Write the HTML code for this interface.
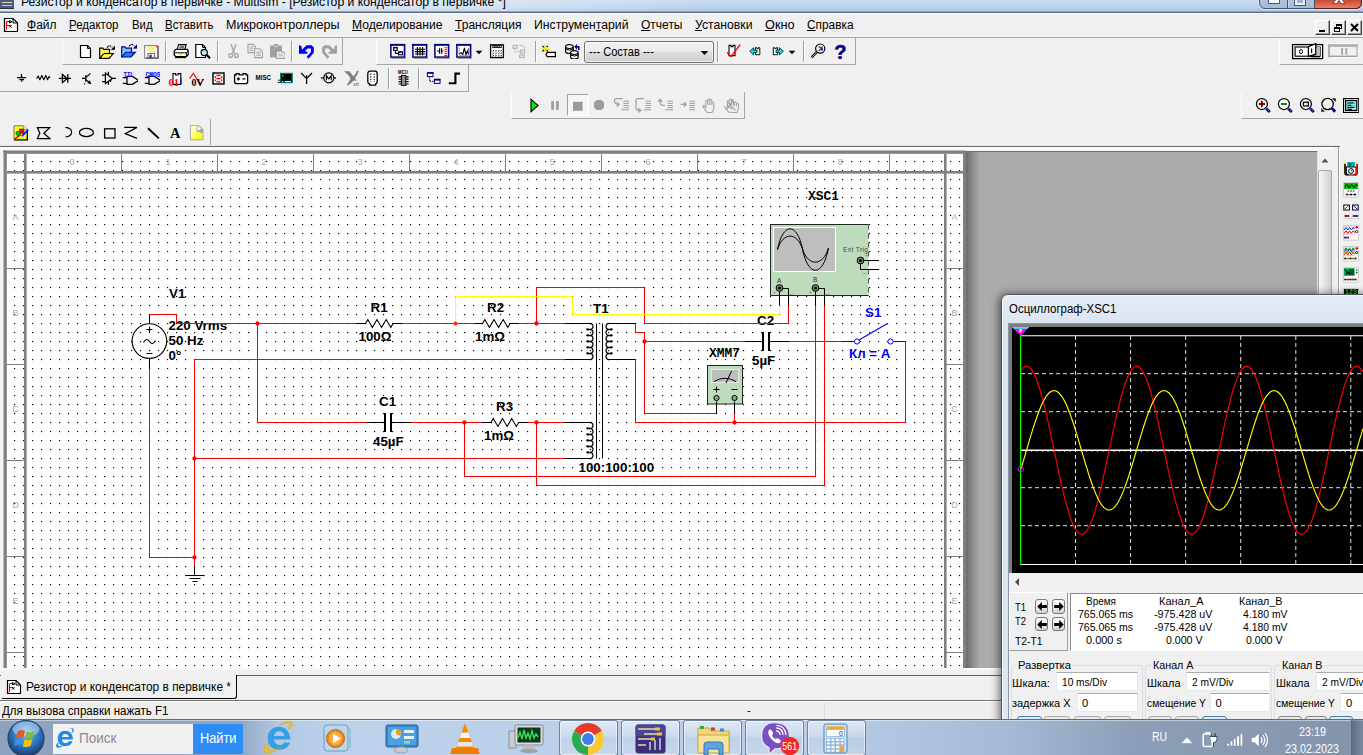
<!DOCTYPE html>
<html lang="ru"><head><meta charset="utf-8"><title>Multisim</title>
<style>
html,body{margin:0;padding:0}
body{width:1363px;height:755px;position:relative;overflow:hidden;background:#f0f0f0;font-family:"Liberation Sans",sans-serif;font-size:12px;color:#000}
.t{position:absolute;white-space:nowrap;transform-origin:0 0;display:block}
u{text-decoration:underline;text-underline-offset:1px}
svg{display:block;overflow:hidden}
svg text{font-family:"Liberation Sans",sans-serif}
</style></head>
<body>
<div style="position:absolute;left:0px;top:0px;width:1363px;height:12px;background:linear-gradient(180deg,#c9dcf0 0%,#bdd3ec 60%,#a9c3e2 100%)"></div><div style="position:absolute;left:0px;top:0px;width:700px;height:11px;background:linear-gradient(90deg,rgba(255,255,255,.55),rgba(255,255,255,.35) 70%,rgba(255,255,255,0))"></div><div style="position:absolute;left:0px;top:11px;width:1363px;height:1px;background:#8ea4c0"></div><div style="position:absolute;left:0px;top:12px;width:1363px;height:1px;background:#5d6b80"></div><div style="position:absolute;left:0px;top:13px;width:1363px;height:1px;background:#fafafa"></div><div style="position:absolute;left:0px;top:0px;width:14px;height:8px;background:#4a5a8a;border-bottom:1px solid #333"></div><div style="position:absolute;left:2px;top:2px;width:10px;height:1px;background:#e8d8a0"></div><div style="position:absolute;left:2px;top:5px;width:10px;height:1px;background:#c0c8e0"></div><span class="t" style="left:20.50px;top:-5.06px;font-size:12.3px;line-height:15px;color:#000;transform:scaleX(0.9917);">Резистор и конденсатор в первичке - Multisim - [Резистор и конденсатор в первичке *]</span><div style="position:absolute;left:1259px;top:-10px;width:103px;height:19px;border:1px solid #47546a;border-radius:0 0 6px 6px;background:linear-gradient(180deg,#b9cbe0,#a6bbd6);box-sizing:border-box;box-shadow:0 0 0 1px rgba(255,255,255,.45)"></div><div style="position:absolute;left:1314px;top:-10px;width:48px;height:19px;border:1px solid #5c1f18;border-left:none;border-radius:0 0 6px 0;background:linear-gradient(180deg,#c23a28 0%,#cc4a34 55%,#e08462 100%);box-sizing:border-box"></div><div style="position:absolute;left:1287px;top:-10px;width:1px;height:18px;background:#47546a"></div><div style="position:absolute;left:1288px;top:-10px;width:1px;height:18px;background:rgba(255,255,255,.35)"></div><div style="position:absolute;left:1313.5px;top:-10px;width:1px;height:18px;background:#47546a"></div><div style="position:absolute;left:1268px;top:-4px;width:11.5px;height:7.5px;background:#fbfcfe;border:1px solid #4a5870;box-sizing:border-box"></div><div style="position:absolute;left:1294.5px;top:-5px;width:10.5px;height:9.5px;background:#9fb4d0;border:2px solid #eef2f8;outline:1px solid #4a5870;box-sizing:border-box"></div><svg style="position:absolute;left:1330px;top:0px" width="18" height="5" viewBox="0 0 18 5"><path d="M3,3.6 L6.2,-1 H9 L9,0.4 L9,-1 H11.8 L15,3.6 H11.2 L9,0.6 L6.8,3.6 Z" fill="#fff" stroke="#6a2a22" stroke-width="0.8"/></svg><div style="position:absolute;left:0px;top:14px;width:1363px;height:23px;background:#f0f0f0"></div><div style="position:absolute;left:0px;top:37px;width:1363px;height:1px;background:#a8a8a8"></div><svg style="position:absolute;left:3.0px;top:17.0px" width="16" height="16" viewBox="0 0 16 16"><path d="M1.5,1.5 H10 L14.5,6 V14.5 H1.5 Z" fill="#fff" stroke="#000" stroke-width="1.2" /><path d="M10,1.5 V6 H14.5" fill="none" stroke="#000" stroke-width="1" /><path d="M3.5,4.5 H6.5 M3.5,4.5 V12 M3.5,8.5 H6" fill="none" stroke="#f00" stroke-width="1.2" /><path d="M6.5,3.5 L9,4.8 L6.5,6 Z M6,8 l2.5,2.5 M8.5,8 l-2.5,2.5" fill="none" stroke="#000" stroke-width="1" /><path d="M2.5,13.5 l1.5,-1.5" fill="none" stroke="#f00" stroke-width="1" /></svg><span class="t" style="left:27.00px;top:17.74px;font-size:12.3px;line-height:15px;color:#000;transform:scaleX(0.9755);"><u>Ф</u>айл</span><span class="t" style="left:69.00px;top:17.74px;font-size:12.3px;line-height:15px;color:#000;transform:scaleX(0.9348);"><u>Р</u>едактор</span><span class="t" style="left:132.00px;top:17.74px;font-size:12.3px;line-height:15px;color:#000;transform:scaleX(0.9212);">Вид</span><span class="t" style="left:165.00px;top:17.74px;font-size:12.3px;line-height:15px;color:#000;transform:scaleX(0.9302);"><u>В</u>ставить</span><span class="t" style="left:226.00px;top:17.74px;font-size:12.3px;line-height:15px;color:#000;transform:scaleX(1.0202);">Ми<u>к</u>роконтроллеры</span><span class="t" style="left:352.00px;top:17.74px;font-size:12.3px;line-height:15px;color:#000;transform:scaleX(0.9833);"><u>М</u>оделирование</span><span class="t" style="left:455.00px;top:17.74px;font-size:12.3px;line-height:15px;color:#000;transform:scaleX(0.9800);"><u>Т</u>рансляция</span><span class="t" style="left:534.00px;top:17.74px;font-size:12.3px;line-height:15px;color:#000;transform:scaleX(0.9933);">Инструмен<u>т</u>арий</span><span class="t" style="left:641.00px;top:17.74px;font-size:12.3px;line-height:15px;color:#000;transform:scaleX(0.9761);"><u>О</u>тчеты</span><span class="t" style="left:695.00px;top:17.74px;font-size:12.3px;line-height:15px;color:#000;transform:scaleX(0.9931);"><u>У</u>становки</span><span class="t" style="left:765.00px;top:17.74px;font-size:12.3px;line-height:15px;color:#000;transform:scaleX(1.0321);"><u>О</u>кно</span><span class="t" style="left:807.00px;top:17.74px;font-size:12.3px;line-height:15px;color:#000;transform:scaleX(0.9637);"><u>С</u>правка</span><div style="position:absolute;left:1315px;top:20px;width:15px;height:15px;background:#f0f0f0;border:1px solid;border-color:#fff #404040 #404040 #fff;box-sizing:border-box;box-shadow:inset -1px -1px 0 #a0a0a0"></div><div style="position:absolute;left:1331px;top:20px;width:15px;height:15px;background:#f0f0f0;border:1px solid;border-color:#fff #404040 #404040 #fff;box-sizing:border-box;box-shadow:inset -1px -1px 0 #a0a0a0"></div><div style="position:absolute;left:1347px;top:20px;width:15px;height:15px;background:#f0f0f0;border:1px solid;border-color:#fff #404040 #404040 #fff;box-sizing:border-box;box-shadow:inset -1px -1px 0 #a0a0a0"></div><div style="position:absolute;left:1319px;top:30px;width:6px;height:2px;background:#000"></div><div style="position:absolute;left:1336px;top:24px;width:6px;height:5px;border:1px solid #000;border-top-width:2px;box-sizing:border-box"></div><div style="position:absolute;left:1334px;top:27px;width:6px;height:5px;border:1px solid #000;border-top-width:2px;box-sizing:border-box;background:#f0f0f0"></div><svg style="position:absolute;left:1350px;top:23px" width="10" height="10" viewBox="0 0 10 10"><path d="M1,1 L8,8 M8,1 L1,8" stroke="#000" stroke-width="2"/></svg><div style="position:absolute;left:62px;top:38px;width:281px;height:27px;border-bottom:1px solid #a6a6a6;box-sizing:border-box;border-right:1px solid #a6a6a6;border-left:1px solid #fdfdfd;"></div><svg style="position:absolute;left:77.0px;top:43.0px" width="16" height="16" viewBox="0 0 16 16"><path d="M3.5,2.5 H10.5 L13.5,5.5 V14.5 H3.5 Z" fill="#fff" stroke="#000" stroke-width="1.2" /><path d="M10.5,2.5 V5.5 H13.5" fill="none" stroke="#000" stroke-width="1" /></svg><svg style="position:absolute;left:99.0px;top:43.0px" width="16" height="16" viewBox="0 0 16 16"><g transform="translate(0,0)"><path d="M0.7,15.2 V5.1 H4 L4.7,6.4 H10.5 V10.4" fill="#f6f060" stroke="#000" stroke-width="1.15" /><path d="M0.9,15.3 L4.7,10.5 H14.3 L10,15.3 Z" fill="#f2ec30" stroke="#000" stroke-width="1.15" /><path d="M2,8 h7 M2,10 h3 M5,12.6 h7 M4,14 h6" fill="none" stroke="#ffffff" stroke-width="0.9" stroke-dasharray="1,1"/><path d="M8,4.8 Q10.6,0.8 13.2,4.4" fill="none" stroke="#000" stroke-width="1.1" stroke-dasharray="2.2,0.8"/><path d="M16,2.8 V6.7 H12.1 Z" fill="#000" stroke="#000" stroke-width="0.3" /></g></svg><svg style="position:absolute;left:121.0px;top:43.0px" width="16" height="16" viewBox="0 0 16 16"><g transform="translate(0,-1.3)"><path d="M0.7,15.2 V5.1 H4 L4.7,6.4 H10.5 V10.4" fill="#86c0fa" stroke="#000088" stroke-width="1.15" /><path d="M0.9,15.3 L4.7,10.5 H14.3 L10,15.3 Z" fill="#0a84f8" stroke="#000088" stroke-width="1.15" /><path d="M8,4.8 Q10.6,0.8 13.2,4.4" fill="none" stroke="#000088" stroke-width="1.1" stroke-dasharray="2.2,0.8"/><path d="M16,2.8 V6.7 H12.1 Z" fill="#000088" stroke="#000088" stroke-width="0.3" /></g></svg><svg style="position:absolute;left:143.0px;top:43.0px" width="16" height="16" viewBox="0 0 16 16"><rect x="1.5" y="2.5" width="13" height="12.3" fill="#f3f3f3" stroke="#8a8a8a" stroke-width="1"/><path d="M15.3,3 V15.4 H2.2" fill="none" stroke="#5a5a5a" stroke-width="1" /><rect x="4.6" y="3" width="7.2" height="6" fill="#f3ee72" stroke="none" stroke-width="1"/><path d="M5,9 l6,-6 M5,6 l3,-3 M8,9 l3.5,-3.5" fill="none" stroke="#fffde0" stroke-width="0.9" /><rect x="5" y="10.6" width="6.4" height="4" fill="#fafafa" stroke="#5e5e5e" stroke-width="0.9"/><rect x="6.6" y="11.8" width="2" height="2.8" fill="#222" stroke="none" stroke-width="1"/><rect x="12.8" y="3.2" width="1" height="1.2" fill="#f00" stroke="none" stroke-width="1"/></svg><svg style="position:absolute;left:173.0px;top:43.0px" width="16" height="16" viewBox="0 0 16 16"><path d="M4.2,6.3 L5.6,1.6 H13.2 L11.8,6.3" fill="#fff" stroke="#000" stroke-width="1.1" /><path d="M6.8,3.2 H11.5 M6.3,4.8 H11" fill="none" stroke="#000" stroke-width="0.8" /><path d="M1.2,8 L3,6.3 H14.2 L15.2,7.5 V11.5 L13.5,13.6 H2.6 L1.2,12 Z" fill="#fff" stroke="#000" stroke-width="1.2" /><path d="M1.4,9.8 H13.4 L15,8 M13.4,9.8 V13.4" fill="none" stroke="#000" stroke-width="1" /><rect x="6.5" y="11" width="3" height="1.2" fill="#e8d800" stroke="none" stroke-width="1"/><path d="M2,14.6 H13" fill="none" stroke="#000" stroke-width="1.1" /></svg><svg style="position:absolute;left:195.0px;top:43.0px" width="16" height="16" viewBox="0 0 16 16"><path d="M0.8,1.5 H7.5 L10.5,4.5 V14.5 H0.8 Z" fill="#fff" stroke="#000" stroke-width="1.2" /><path d="M7.5,1.5 V4.5 H10.5" fill="none" stroke="#000" stroke-width="1" /><circle cx="9.2" cy="9.4" r="3.1" fill="#bff3f6" stroke="#000" stroke-width="1.2"/><path d="M8,8.4 q1,-1.2 2.2,-0.6" fill="none" stroke="#33b8d8" stroke-width="1" /><path d="M11.6,11.8 L15,15.2" fill="none" stroke="#000" stroke-width="2" /></svg><svg style="position:absolute;left:225.0px;top:43.0px" width="16" height="16" viewBox="0 0 16 16"><path d="M6,1.2 L9.6,10.4 M11,1.2 L7.4,10.4" fill="none" stroke="#a0a0a0" stroke-width="1.3" /><circle cx="5.6" cy="12.6" r="1.9" fill="none" stroke="#a0a0a0" stroke-width="1.3"/><circle cx="11.4" cy="12.6" r="1.9" fill="none" stroke="#a0a0a0" stroke-width="1.3"/></svg><svg style="position:absolute;left:247.0px;top:43.0px" width="16" height="16" viewBox="0 0 16 16"><path d="M1,1.4 H6 L8.4,3.8 V9.6 H1 Z" fill="#f4f4f4" stroke="#a0a0a0" stroke-width="1.1" /><path d="M2.6,4 H6.5 M2.6,5.8 H6.5 M2.6,7.6 H6.5" fill="none" stroke="#a0a0a0" stroke-width="0.9" /><path d="M7.6,5.8 H12.6 L15.6,8.8 V14.6 H7.6 Z" fill="#f4f4f4" stroke="#a0a0a0" stroke-width="1.1" /><path d="M9.3,9 H13.8 M9.3,10.8 H13.8 M9.3,12.6 H13.8" fill="none" stroke="#a0a0a0" stroke-width="0.9" /></svg><svg style="position:absolute;left:269.0px;top:43.0px" width="16" height="16" viewBox="0 0 16 16"><rect x="1" y="2.6" width="12" height="11.8" fill="#a0a0a0" stroke="none" stroke-width="1"/><rect x="4.8" y="1.2" width="4.6" height="2.4" fill="#a0a0a0" stroke="none" stroke-width="1"/><rect x="5.4" y="3.2" width="3.4" height="0.9" fill="#e8e8e8" stroke="none" stroke-width="1"/><path d="M7.4,8.2 H13 L16,10.5 V15.4 H7.4 Z" fill="#f4f4f4" stroke="#a0a0a0" stroke-width="1.1" /><path d="M9.2,10.8 H13.6 M9.2,12.8 H14" fill="none" stroke="#a0a0a0" stroke-width="0.9" /></svg><svg style="position:absolute;left:298.0px;top:43.0px" width="16" height="16" viewBox="0 0 16 16"><path d="M1,2.2 L3.4,3 L3.9,6.8 L8.6,2.2 H13.8 L15.8,4.5 V9.7 L10.6,15.8 L8.6,13.8 L12.9,8.9 V5.4 H9.6 L7,8 L9.8,9.3 L9,10.8 H1 Z" fill="#0000ff"/></svg><svg style="position:absolute;left:321.0px;top:43.0px" width="16" height="16" viewBox="0 0 16 16"><g transform="translate(17,0) scale(-1,1)"><path d="M1,2.2 L3.4,3 L3.9,6.8 L8.6,2.2 H13.8 L15.8,4.5 V9.7 L10.6,15.8 L8.6,13.8 L12.9,8.9 V5.4 H9.6 L7,8 L9.8,9.3 L9,10.8 H1 Z" fill="#a0a0a0"/></g></svg><div style="position:absolute;left:165px;top:41px;width:1px;height:21px;background:#a0a0a0"></div><div style="position:absolute;left:166px;top:41px;width:1px;height:21px;background:#fff"></div><div style="position:absolute;left:217px;top:41px;width:1px;height:21px;background:#a0a0a0"></div><div style="position:absolute;left:218px;top:41px;width:1px;height:21px;background:#fff"></div><div style="position:absolute;left:291px;top:41px;width:1px;height:21px;background:#a0a0a0"></div><div style="position:absolute;left:292px;top:41px;width:1px;height:21px;background:#fff"></div><div style="position:absolute;left:376px;top:38px;width:480px;height:27px;border-bottom:1px solid #a6a6a6;box-sizing:border-box;border-right:1px solid #a6a6a6;border-left:1px solid #fdfdfd;"></div><svg style="position:absolute;left:390.0px;top:43.0px" width="16" height="16" viewBox="0 0 16 16"><rect x="0.9" y="1.7" width="13.6" height="12.4" fill="#fff" stroke="#000080" stroke-width="1.5"/><rect x="0.15" y="0.95" width="15.1" height="1.7" fill="#000080" stroke="none" stroke-width="1"/><path d="M1.6,15.4 H15.8 V2.4" fill="none" stroke="#8c8c8c" stroke-width="0.9" /><rect x="3.6" y="4.4" width="3.6" height="3" fill="#fff" stroke="#000" stroke-width="1.1"/><rect x="3.6" y="4.2" width="3.6" height="1.2" fill="#000080" stroke="none" stroke-width="1"/><rect x="8.6" y="8.8" width="4" height="3" fill="#fff" stroke="#000" stroke-width="1.1"/><rect x="8.6" y="8.6" width="4" height="1.2" fill="#000080" stroke="none" stroke-width="1"/><path d="M5.4,7.4 V10.4 H8.6" fill="none" stroke="#000" stroke-width="1.1" /></svg><svg style="position:absolute;left:412.0px;top:43.0px" width="16" height="16" viewBox="0 0 16 16"><rect x="0.9" y="1.7" width="13.6" height="12.4" fill="#fff" stroke="#000080" stroke-width="1.5"/><rect x="0.15" y="0.95" width="15.1" height="1.7" fill="#000080" stroke="none" stroke-width="1"/><path d="M1.6,15.4 H15.8 V2.4" fill="none" stroke="#8c8c8c" stroke-width="0.9" /><path d="M3,6.2 H13 M3,8.6 H13 M3,11 H13 M5.4,4 V12.6 M8,4 V12.6 M10.6,4 V12.6" fill="none" stroke="#000" stroke-width="1.1" /></svg><svg style="position:absolute;left:434.0px;top:43.0px" width="16" height="16" viewBox="0 0 16 16"><rect x="0.9" y="1.7" width="13.6" height="12.4" fill="#fff" stroke="#000080" stroke-width="1.5"/><rect x="0.15" y="0.95" width="15.1" height="1.7" fill="#000080" stroke="none" stroke-width="1"/><path d="M1.6,15.4 H15.8 V2.4" fill="none" stroke="#8c8c8c" stroke-width="0.9" /><path d="M3,8 H5.6 M7.6,8 H9.4 M5.6,5.2 V10.8 M7.6,5.2 V10.8" fill="none" stroke="#000" stroke-width="1.2" /><path d="M10.4,4.8 H13 M10.4,6.8 H13 M10.4,8.8 H13 M10.4,10.8 H13 M10.4,12.6 H13" fill="none" stroke="#f00" stroke-width="1.1" /></svg><svg style="position:absolute;left:456.0px;top:43.0px" width="16" height="16" viewBox="0 0 16 16"><rect x="0.9" y="1.7" width="13.6" height="12.4" fill="#fff" stroke="#000080" stroke-width="1.5"/><rect x="0.15" y="0.95" width="15.1" height="1.7" fill="#000080" stroke="none" stroke-width="1"/><path d="M1.6,15.4 H15.8 V2.4" fill="none" stroke="#8c8c8c" stroke-width="0.9" /><path d="M3,11 L5.2,9.6 L6.8,11.4 L8.4,4.8 L10,11.8 L11.4,8 L12.6,11" fill="none" stroke="#000" stroke-width="1.1" /><path d="M3.2,4.4 V12.4 H13" fill="none" stroke="#888" stroke-width="0.8" /><path d="M12.6,5 V12" fill="none" stroke="#444" stroke-width="0.8" /></svg><svg style="position:absolute;left:489.0px;top:43.0px" width="16" height="16" viewBox="0 0 16 16"><rect x="1.6" y="1.8" width="12.8" height="12.8" fill="#fff" stroke="#000" stroke-width="1.3"/><rect x="3.8" y="2.4" width="8.4" height="2.2" fill="#fff" stroke="#000" stroke-width="0.9"/><path d="M5.2,3.6 h1.4 M7.4,3.6 h1.4 M9.6,3.6 h1.2" fill="none" stroke="#000" stroke-width="1" /><path d="M4.6,7 l-0.8,1.6 M7.4,7 l-0.8,1.6 M10.2,7 l-0.8,1.6 M12.6,7 l-0.8,1.6 M4.6,9.6 l-0.8,1.6 M7.4,9.6 l-0.8,1.6 M10.2,9.6 l-0.8,1.6 M12.6,9.6 l-0.8,1.6 M4.6,12 l-0.8,1.6 M7.4,12 l-0.8,1.6 M10.2,12 l-0.8,1.6 M12.6,12 l-0.8,1.6" fill="none" stroke="#000" stroke-width="0.85" /></svg><svg style="position:absolute;left:511.0px;top:43.0px" width="16" height="16" viewBox="0 0 16 16"><rect x="2" y="2.4" width="4.2" height="2.8" fill="none" stroke="#b0b0b0" stroke-width="1.1"/><rect x="9.4" y="7.2" width="4.2" height="2.8" fill="none" stroke="#b0b0b0" stroke-width="1.1"/><rect x="8.6" y="12" width="4.6" height="2.4" fill="none" stroke="#b0b0b0" stroke-width="1.1"/><path d="M4,5.4 V8.6 H9.2 M8.6,2.4 h2.6 l2.4,2.6 v2" fill="none" stroke="#b0b0b0" stroke-width="1.1" stroke-dasharray="1.6,1"/></svg><svg style="position:absolute;left:541.0px;top:43.0px" width="16" height="16" viewBox="0 0 16 16"><path d="M4.2,2 V9.4 M0.8,5.6 H8.2" fill="none" stroke="#f4ec00" stroke-width="1.6" /><path d="M1.4,2.8 L3,4.4 M7,2.8 L5.6,4.2 M1.4,8.6 L3,7 M7,8.4 L5.6,7" fill="none" stroke="#000" stroke-width="1.1" /><path d="M6.2,9.4 H14.4 V13.6 H6.2 L5,11.5 Z" fill="#fff" stroke="#000" stroke-width="1.2" /></svg><svg style="position:absolute;left:564.0px;top:43.0px" width="16" height="16" viewBox="0 0 16 16"><path d="M1.6,3.6 V8.4 Q1.6,10.4 5.4,10.4 Q9.2,10.4 9.2,8.4 V3.6" fill="#fff" stroke="#000" stroke-width="1.2" /><ellipse cx="5.4" cy="3.6" rx="3.8" ry="1.9" fill="#fff" stroke="#000" stroke-width="1.2"/><path d="M1.6,6 Q5.4,8.2 9.2,6" fill="none" stroke="#000" stroke-width="1" /><path d="M6.6,9.8 V14 Q6.6,16 10.4,16 Q14.2,16 14.2,14 V9.8" fill="#fff" stroke="#000" stroke-width="1.2" /><ellipse cx="10.4" cy="9.6" rx="3.8" ry="1.9" fill="#fff" stroke="#000" stroke-width="1.2"/><path d="M6.6,12 Q10.4,14 14.2,12" fill="none" stroke="#000" stroke-width="1" /><path d="M14.8,7 V3.8 H12" fill="none" stroke="#000090" stroke-width="1.5" /><path d="M10.4,3.8 L13,1.2 V6.4 Z" fill="#000090" stroke="#000090" stroke-width="0.3" /></svg><svg style="position:absolute;left:724.5px;top:43.0px" width="16" height="16" viewBox="0 0 16 16"><path d="M4,2.4 H6 V3.6 H8 V2.4 H10 V12.6 H4 Z" fill="#fff" stroke="#000" stroke-width="1.1" /><path d="M2.2,9.4 L6,13.6 L15.2,1.6" fill="none" stroke="#f00" stroke-width="1.5" /></svg><svg style="position:absolute;left:746.5px;top:43.0px" width="16" height="16" viewBox="0 0 16 16"><g transform="translate(1.9,2.2) scale(0.78)"><path d="M8.4,3.2 H10.4 V4.4 H12.2 V3.2 H14 V12.2 H8.4 Z" fill="#fff" stroke="#000" stroke-width="1.2" /><path d="M1,7.8 L6,3.2 V6.2 H10.4 V9.4 H6 V12.4 Z" fill="#00e0f0" stroke="#000" stroke-width="0.9" /></g></svg><svg style="position:absolute;left:769.5px;top:43.0px" width="16" height="16" viewBox="0 0 16 16"><g transform="translate(1.7,2.2) scale(0.78)"><path d="M2,3.2 H4 V4.4 H5.8 V3.2 H7.6 V12.2 H2 Z" fill="#fff" stroke="#000" stroke-width="1.2" /><path d="M15,7.8 L10,3.2 V6.2 H5.6 V9.4 H10 V12.4 Z" fill="#00e0f0" stroke="#000" stroke-width="0.9" /></g></svg><svg style="position:absolute;left:810.0px;top:43.0px" width="16" height="16" viewBox="0 0 16 16"><circle cx="10.2" cy="5.6" r="4.6" fill="#fffbd8" stroke="#000" stroke-width="1.2"/><path d="M8.6,3.4 L11.6,5.6 L8.6,7.8 M11.8,3.2 q1.2,2.4 0,4.8" fill="none" stroke="#1030d0" stroke-width="1.2" /><path d="M6.8,9 L1.6,14.4" fill="none" stroke="#000" stroke-width="2.4" /><path d="M6.6,9.2 L1.8,14.2" fill="none" stroke="#d8d8d8" stroke-width="0.8" /></svg><svg style="position:absolute;left:832.0px;top:43.0px" width="16" height="16" viewBox="0 0 16 16"><text stroke="#000080" stroke-width="0.5" x="8.4" y="15.6" font-size="20" font-weight="bold" fill="#000080" style="font-family:'Liberation Sans'" text-anchor="middle">?</text></svg><svg style="position:absolute;left:475.0px;top:48.0px" width="8" height="8" viewBox="0 0 16 16"><path d="M1.2,5.4 H14.8 L8,12.6 Z" fill="#000"/></svg><svg style="position:absolute;left:788.0px;top:48.0px" width="8" height="8" viewBox="0 0 16 16"><path d="M1.2,5.4 H14.8 L8,12.6 Z" fill="#000"/></svg><div style="position:absolute;left:535px;top:41px;width:1px;height:21px;background:#a0a0a0"></div><div style="position:absolute;left:536px;top:41px;width:1px;height:21px;background:#fff"></div><div style="position:absolute;left:717px;top:41px;width:1px;height:21px;background:#a0a0a0"></div><div style="position:absolute;left:718px;top:41px;width:1px;height:21px;background:#fff"></div><div style="position:absolute;left:803px;top:41px;width:1px;height:21px;background:#a0a0a0"></div><div style="position:absolute;left:804px;top:41px;width:1px;height:21px;background:#fff"></div><div style="position:absolute;left:584px;top:41px;width:130px;height:22px;border:1px solid #707070;border-radius:3px;background:linear-gradient(180deg,#f2f2f2,#ebebeb 45%,#dddddd 50%,#cfcfcf);box-sizing:border-box;box-shadow:inset 0 0 0 1px rgba(255,255,255,.7)"></div><span class="t" style="left:589.00px;top:45.44px;font-size:12.3px;line-height:15px;color:#000;transform:scaleX(0.9008);">--- Состав ---</span><svg style="position:absolute;left:699.5px;top:48.0px" width="9" height="9" viewBox="0 0 16 16"><path d="M1.2,5.4 H14.8 L8,12.6 Z" fill="#000"/></svg><div style="position:absolute;left:1279px;top:38px;width:90px;height:27px;border-bottom:1px solid #a6a6a6;box-sizing:border-box;border-left:1px solid #fdfdfd;"></div><svg style="position:absolute;left:1280px;top:38px" width="83" height="27" viewBox="1280 38 83 27"><rect x="1292.6" y="44.6" width="30" height="14" fill="#fff" stroke="#000" stroke-width="1.3"/><rect x="1295.1" y="47" width="25" height="9.2" fill="#fff" stroke="#000" stroke-width="1.15"/><rect x="1316.5" y="46.5" width="3.4" height="9.6" fill="#c0c0c0"/><ellipse cx="1301" cy="51.6" rx="1.6" ry="2" fill="none" stroke="#000" stroke-width="1"/><path d="M1308.4,46.6 L1315.8,43.6 V54.2 L1308.4,56.4 Z" fill="#fff" stroke="#000" stroke-width="1.3"/><path d="M1311.6,48.4 V53" stroke="#000" stroke-width="1.2"/><path d="M1310.5,56.6 H1320" stroke="#000" stroke-width="1.4"/><rect x="1329" y="44.6" width="28.4" height="11.8" fill="#f0f0f0" stroke="#a0a0a0" stroke-width="1.6"/><path d="M1328.4,43.8 H1358" stroke="#fff" stroke-width="1"/><path d="M1329,46 H1357.4" stroke="#a0a0a0" stroke-width="1.4"/><path d="M1331.2,57.8 H1358.2 V45" stroke="#fff" stroke-width="1" fill="none"/><rect x="1341.2" y="48.2" width="1.8" height="6.4" fill="#a0a0a0"/><rect x="1345.4" y="48.2" width="1.8" height="6.4" fill="#a0a0a0"/></svg><div style="position:absolute;left:-2px;top:65px;width:471px;height:27px;border-bottom:1px solid #a6a6a6;box-sizing:border-box;border-right:1px solid #a6a6a6;"></div><svg style="position:absolute;left:13.0px;top:70.0px" width="16" height="16" viewBox="0 0 16 16"><path d="M8.5,4 V7.5 M4,7.5 H13.2 M6.4,9.6 H11 M8,11.2 H9.4" fill="none" stroke="#000" stroke-width="1.25" /></svg><svg style="position:absolute;left:35.0px;top:70.0px" width="16" height="16" viewBox="0 0 16 16"><path d="M1.6,8.6 L3.2,6 L4.8,9.8 L6.8,5.4 L8.8,9.8 L10.8,5.4 L12.6,9.8 L14,6.4 L15,8" fill="none" stroke="#000" stroke-width="1.1" stroke-linejoin="round"/></svg><svg style="position:absolute;left:57.0px;top:70.0px" width="16" height="16" viewBox="0 0 16 16"><path d="M1.8,8.4 H14 M5.4,4.4 V12.6 L10.2,8.4 Z M10.8,4 V12.8" fill="none" stroke="#000" stroke-width="1.25" /></svg><svg style="position:absolute;left:79.0px;top:70.0px" width="16" height="16" viewBox="0 0 16 16"><path d="M3,8.4 H6.8 M6.8,5 V12 M6.8,7.6 L11.4,3.4 M6.8,9.4 L11.6,13.6" fill="none" stroke="#000" stroke-width="1.2" /><path d="M11.8,13.8 L8.6,13 L10.8,10.6 Z" fill="#000" stroke="#000" stroke-width="0.5" /><rect x="5" y="13.4" width="1.1" height="1.1" fill="#000" stroke="none" stroke-width="1"/></svg><svg style="position:absolute;left:100.0px;top:70.0px" width="16" height="16" viewBox="0 0 16 16"><path d="M5.4,3 V13.6 L12.4,8.4 Z" fill="none" stroke="#000" stroke-width="1.2" /><path d="M2,5.2 H5.4 M2,11.6 H5.4 M12.4,8.4 H16 M8.4,1.8 V5 M8.4,11.6 V14.8 M10.6,10 V12" fill="none" stroke="#000" stroke-width="1.2" /></svg><svg style="position:absolute;left:122.0px;top:70.0px" width="16" height="16" viewBox="0 0 16 16"><path d="M0.8,7.6 H5 M0.8,13.4 H5 M5,6.4 H10.4 L16.6,10.4 L10.4,14.4 H5 Z" fill="none" stroke="#000" stroke-width="1.25" /><text x="1.6" y="6.6" font-size="6.4" font-weight="bold" fill="#0000ff" style="font-family:'Liberation Mono'" text-anchor="start" textLength="10" lengthAdjust="spacingAndGlyphs">TTL</text></svg><svg style="position:absolute;left:144.0px;top:70.0px" width="16" height="16" viewBox="0 0 16 16"><path d="M0.8,7.6 H5 M0.8,13.4 H5 M5,6.4 H10.4 L16.6,10.4 L10.4,14.4 H5 Z" fill="none" stroke="#000" stroke-width="1.25" /><text x="1.6" y="6.6" font-size="6.4" font-weight="bold" fill="#0000ff" style="font-family:'Liberation Mono'" text-anchor="start" textLength="15" lengthAdjust="spacingAndGlyphs">CMOS</text></svg><svg style="position:absolute;left:166.0px;top:70.0px" width="16" height="16" viewBox="0 0 16 16"><path d="M7,14 V3.6 H9.6 V5 H12 V3.6 H14.8 V14.4 H7" fill="#fff" stroke="#000" stroke-width="1.1" /><path d="M15,8 V14" fill="none" stroke="#0000c0" stroke-width="1" /><text x="2.4" y="15.6" font-size="9.5" font-weight="bold" fill="#f00" style="font-family:'Liberation Serif'" text-anchor="start" textLength="10.5" lengthAdjust="spacingAndGlyphs">01</text></svg><svg style="position:absolute;left:188.0px;top:70.0px" width="16" height="16" viewBox="0 0 16 16"><path d="M1.6,8.6 L5.4,3.2 L12,14.6 L15.6,9" fill="none" stroke="#f00" stroke-width="1.1" /><text x="3.6" y="15.6" font-size="9.5" font-weight="bold" fill="#000" style="font-family:'Liberation Serif'" text-anchor="start" textLength="12" lengthAdjust="spacingAndGlyphs">0V</text></svg><svg style="position:absolute;left:210.0px;top:70.0px" width="16" height="16" viewBox="0 0 16 16"><rect x="3" y="3" width="11" height="11" fill="none" stroke="#000" stroke-width="1.4"/><path d="M6.4,5.4 H10.6 M6.4,8.6 H10.6 M6.4,11.8 H10.6 M5.4,6.2 V8 M5.4,9.4 V11 M11.6,6.2 V8 M11.6,9.4 V11" fill="none" stroke="#f00" stroke-width="1.2" /></svg><svg style="position:absolute;left:233.0px;top:70.0px" width="16" height="16" viewBox="0 0 16 16"><path d="M1.6,4.8 H3.2 V3.6 H6.2 V4.8 H10 V3.6 H13 V4.8 H14.6 V12.6 L13.4,13.6 H2.8 L1.6,12.6 Z" fill="#fff" stroke="#000" stroke-width="1.3" /><path d="M3.8,8.8 H7 M5.4,7.2 V10.4 M9.4,8.8 H12.4" fill="none" stroke="#000" stroke-width="1.3" /></svg><svg style="position:absolute;left:255.0px;top:70.0px" width="16" height="16" viewBox="0 0 16 16"><text x="0.6" y="10.2" font-size="7.4" font-weight="bold" fill="#000" style="font-family:'Liberation Sans'" text-anchor="start" textLength="15.4" lengthAdjust="spacingAndGlyphs">MISC</text></svg><svg style="position:absolute;left:277.0px;top:70.0px" width="16" height="16" viewBox="0 0 16 16"><rect x="3.6" y="3.4" width="11.6" height="9.2" fill="#000" stroke="#008080" stroke-width="1.2"/><rect x="5" y="5" width="1.4" height="1.4" fill="#00ff00" stroke="none" stroke-width="1"/><rect x="7.8" y="11" width="6" height="1" fill="#fff" stroke="none" stroke-width="1"/><rect x="5" y="11" width="1.2" height="1" fill="#fff" stroke="none" stroke-width="1"/><path d="M1,10.2 H3.4 M0.6,12.4 H3.4" fill="none" stroke="#000" stroke-width="0.9" /></svg><svg style="position:absolute;left:298.0px;top:70.0px" width="16" height="16" viewBox="0 0 16 16"><path d="M8.6,5.2 V14 M8.6,8.6 L3.2,3 M8.6,8.6 L14,3" fill="none" stroke="#000" stroke-width="1.25" /></svg><svg style="position:absolute;left:320.0px;top:70.0px" width="16" height="16" viewBox="0 0 16 16"><circle cx="8.8" cy="7.9" r="5" fill="none" stroke="#000" stroke-width="1.2"/><path d="M6.4,10.2 V5.6 L8.8,8.8 L11.2,5.6 V10.2" fill="none" stroke="#000" stroke-width="1.1" /><path d="M1.6,7.9 H3.8 M13.8,7.9 H16" fill="none" stroke="#000" stroke-width="1.1" /><rect x="0.8" y="7.1" width="1.6" height="1.6" fill="#f00" stroke="none" stroke-width="1"/><rect x="15.6" y="7.1" width="1.6" height="1.6" fill="#f00" stroke="none" stroke-width="1"/></svg><svg style="position:absolute;left:343.0px;top:70.0px" width="16" height="16" viewBox="0 0 16 16"><path d="M1,1.2 L6.4,1.2 Q9,4.6 10.2,6.2 L14,0.8 L15.8,1 Q14.4,5 12.2,8 L13.4,11 L10.6,10.6 Q8,13.6 5.4,15.2 L3.6,15 Q6.4,11.6 7.6,8.6 Q5,4 1,1.2 Z" fill="#808080" stroke="none" stroke-width="1" /><path d="M9.6,3 L13.6,2 L11.4,5.6 Z" fill="#f0f0f0" stroke="none" stroke-width="1" /><text x="10" y="15.8" font-size="5.5" font-weight="bold" fill="#808080" style="font-family:'Liberation Sans'" text-anchor="start" textLength="6" lengthAdjust="spacingAndGlyphs">sit</text></svg><svg style="position:absolute;left:364.0px;top:70.0px" width="16" height="16" viewBox="0 0 16 16"><path d="M6,1.2 H11 Q13.2,1.2 13.2,4 V11.4 Q13.2,13.4 11.6,13.8 V15.2 H5.6 V13.8 Q3.8,13.4 3.8,11.4 V4 Q3.8,1.2 6,1.2 Z" fill="#fff" stroke="#000" stroke-width="1.3" /><path d="M6.8,3.6 V12 M10.2,3.6 V12" fill="none" stroke="#000" stroke-width="1" stroke-dasharray="1.4,1.2"/></svg><svg style="position:absolute;left:395.0px;top:70.0px" width="16" height="16" viewBox="0 0 16 16"><text x="3" y="3.6" font-size="4.6" font-weight="bold" fill="#000" style="font-family:'Liberation Sans'" text-anchor="start" textLength="10" lengthAdjust="spacingAndGlyphs">MCU</text><rect x="6.4" y="5.4" width="4.4" height="10" fill="#8c8c8c" stroke="#000" stroke-width="0.9"/><path d="M3.6,6.8 H6.4 M3.6,9.2 H6.4 M3.6,11.6 H6.4 M3.6,14 H6.4 M10.8,6.8 H13.6 M10.8,9.2 H13.6 M10.8,11.6 H13.6 M10.8,14 H13.6" fill="none" stroke="#000" stroke-width="1.2" /></svg><svg style="position:absolute;left:425.0px;top:70.0px" width="16" height="16" viewBox="0 0 16 16"><rect x="2.4" y="2.6" width="5.6" height="4" fill="#fff" stroke="#000080" stroke-width="1"/><rect x="2" y="2" width="6.4" height="1.8" fill="#000080" stroke="none" stroke-width="1"/><rect x="9.4" y="9.4" width="5.6" height="4" fill="#fff" stroke="#000080" stroke-width="1"/><rect x="9" y="8.8" width="6.4" height="1.8" fill="#000080" stroke="none" stroke-width="1"/><path d="M4.6,7.4 V11.4 H9" fill="none" stroke="#000" stroke-width="1.1" stroke-dasharray="1.1,1.1"/></svg><svg style="position:absolute;left:447.0px;top:70.0px" width="16" height="16" viewBox="0 0 16 16"><path d="M1.8,13.2 H8.4 V3.6 H13" fill="none" stroke="#000" stroke-width="2.1" /></svg><div style="position:absolute;left:388px;top:68px;width:1px;height:21px;background:#a0a0a0"></div><div style="position:absolute;left:389px;top:68px;width:1px;height:21px;background:#fff"></div><div style="position:absolute;left:418px;top:68px;width:1px;height:21px;background:#a0a0a0"></div><div style="position:absolute;left:419px;top:68px;width:1px;height:21px;background:#fff"></div><div style="position:absolute;left:511px;top:92px;width:234px;height:27px;border-bottom:1px solid #a6a6a6;box-sizing:border-box;border-right:1px solid #a6a6a6;border-left:1px solid #fdfdfd;"></div><div style="position:absolute;left:567px;top:94px;width:22px;height:22px;border:1px solid;border-color:#a0a0a0 #fff #fff #a0a0a0;background:#f6f6f6;box-sizing:border-box"></div><svg style="position:absolute;left:525.0px;top:97.0px" width="16" height="16" viewBox="0 0 16 16"><path d="M6,2.2 V14.8 L13,8.5 Z" fill="#00f000" stroke="#000" stroke-width="1.1" /></svg><svg style="position:absolute;left:547.0px;top:97.0px" width="16" height="16" viewBox="0 0 16 16"><rect x="4.2" y="4" width="2.8" height="8.8" fill="#a0a0a0" stroke="none" stroke-width="1"/><rect x="9" y="4" width="2.8" height="8.8" fill="#a0a0a0" stroke="none" stroke-width="1"/></svg><svg style="position:absolute;left:569.0px;top:97.0px" width="16" height="16" viewBox="0 0 16 16"><rect x="4" y="4.8" width="9.6" height="9" fill="#9a9a9a" stroke="none" stroke-width="1"/></svg><svg style="position:absolute;left:591.0px;top:97.0px" width="16" height="16" viewBox="0 0 16 16"><path d="M5.6,3 H10.4 L13,5.6 V10.4 L10.4,13 H5.6 L3,10.4 V5.6 Z" fill="#9c9c9c" stroke="none" stroke-width="1" /></svg><svg style="position:absolute;left:613.0px;top:97.0px" width="16" height="16" viewBox="0 0 16 16"><path d="M10.4,4.2 H16.4 M10.4,6.4 H16.4 M10.4,8.5 H16.4 M10.4,10.7 H16.4 M8.4,12.8 H16.4" fill="none" stroke="#a0a0a0" stroke-width="1" /><path d="M9.6,1.6 H3.4 Q1.4,1.6 1.4,3.6 Q1.4,6.6 4.4,7.2" fill="none" stroke="#a0a0a0" stroke-width="1.2" /><path d="M4,4.8 L6.8,7.4 L4,9.8 Z" fill="#a0a0a0" stroke="#a0a0a0" stroke-width="0.4" /></svg><svg style="position:absolute;left:635.0px;top:97.0px" width="16" height="16" viewBox="0 0 16 16"><path d="M10.4,4.2 H16.4 M10.4,6.4 H16.4 M10.4,8.5 H16.4 M10.4,10.7 H16.4 M8.4,12.8 H16.4" fill="none" stroke="#a0a0a0" stroke-width="1" /><path d="M9,1.6 H2.8 Q1,1.6 1,3.4 V11.4 Q1,13 4,13.2" fill="none" stroke="#a0a0a0" stroke-width="1.2" /><path d="M3.6,10.8 L6.6,13.4 L3.6,15.8 Z" fill="#a0a0a0" stroke="#a0a0a0" stroke-width="0.4" /></svg><svg style="position:absolute;left:657.0px;top:97.0px" width="16" height="16" viewBox="0 0 16 16"><path d="M10.4,4.2 H16.4 M10.4,6.4 H16.4 M10.4,8.5 H16.4 M10.4,10.7 H16.4 M8.4,12.8 H16.4" fill="none" stroke="#a0a0a0" stroke-width="1" /><path d="M8,8.4 H5.6 Q3,8.2 3,3" fill="none" stroke="#a0a0a0" stroke-width="1.2" /><path d="M0.6,4.6 L3,1.4 L5.6,4.6 Z" fill="#a0a0a0" stroke="#a0a0a0" stroke-width="0.4" /></svg><svg style="position:absolute;left:679.0px;top:97.0px" width="16" height="16" viewBox="0 0 16 16"><path d="M10.4,4.2 H16.4 M10.4,6.4 H16.4 M10.4,8.5 H16.4 M10.4,10.7 H16.4 M10.4,12.8 H16.4" fill="none" stroke="#a0a0a0" stroke-width="1" /><path d="M1.6,7.4 H6" fill="none" stroke="#a0a0a0" stroke-width="1.2" /><path d="M5,4.8 L8,7.4 L5,10 Z" fill="#a0a0a0" stroke="#a0a0a0" stroke-width="0.4" /></svg><svg style="position:absolute;left:701.0px;top:97.0px" width="16" height="16" viewBox="0 0 16 16"><path d="M2,9.6 L4.4,13.2 L6,15.4 H11 L12.8,12 V6.2 Q12.8,5 11.8,5 Q10.8,5 10.8,6.2 V8 V3.8 Q10.8,2.6 9.8,2.6 Q8.8,2.6 8.8,3.8 V8 V3.2 Q8.8,2 7.8,2 Q6.8,2 6.8,3.2 V8 V4.6 Q6.8,3.6 5.8,3.6 Q4.8,3.6 4.8,4.6 V10.6 L3.2,8.6 Q2,8 2,9.6 Z" fill="none" stroke="#a0a0a0" stroke-width="1.05" /></svg><svg style="position:absolute;left:723.0px;top:97.0px" width="16" height="16" viewBox="0 0 16 16"><path d="M1.4,9.6 L4,13 L5.6,15.2 H9 M4.4,10.4 V4.6 Q4.4,3.6 5.4,3.6 Q6.4,3.6 6.4,4.6 V8 M6.4,3.2 Q6.4,2 7.4,2 Q8.4,2 8.4,3.2 V8 M8.4,3.8 Q8.4,2.6 9.4,2.6 Q10.4,2.6 10.4,3.8 V8" fill="none" stroke="#a0a0a0" stroke-width="1.05" /><path d="M9.4,15.4 H14 L15.4,12 V7.4 Q15.4,6.2 14.4,6.2 Q13.4,6.2 13.4,7.4 V9 M11.4,9 V6 Q11.4,5 12.4,5 Q13.4,5 13.4,6" fill="none" stroke="#a0a0a0" stroke-width="1.05" /><path d="M3,12.8 L10.6,3.6 M5.4,5.6 L12.6,13.6 M3.8,8.4 L9,12" fill="none" stroke="#a0a0a0" stroke-width="1.3" /></svg><div style="position:absolute;left:1241px;top:92px;width:130px;height:27px;border-bottom:1px solid #a6a6a6;box-sizing:border-box;border-left:1px solid #fdfdfd;"></div><svg style="position:absolute;left:1255.0px;top:97.0px" width="16" height="16" viewBox="0 0 16 16"><circle cx="6.9" cy="7" r="5.5" fill="#fff" stroke="#000" stroke-width="1.25"/><path d="M6.9,3.8 V10.2 M3.7,7 H10.1" fill="none" stroke="#800000" stroke-width="1.9" /><path d="M11.2,11.4 L14.8,15" fill="none" stroke="#000080" stroke-width="2.8" /><path d="M11.6,12.6 l1,-1 M13,14 l1,-1" fill="none" stroke="#e8e8ff" stroke-width="0.6" /></svg><svg style="position:absolute;left:1277.0px;top:97.0px" width="16" height="16" viewBox="0 0 16 16"><circle cx="6.9" cy="7" r="5.5" fill="#fff" stroke="#000" stroke-width="1.25"/><path d="M3.9,7 H9.9" fill="none" stroke="#008000" stroke-width="1.9" /><path d="M11.2,11.4 L14.8,15" fill="none" stroke="#000080" stroke-width="2.8" /><path d="M11.6,12.6 l1,-1 M13,14 l1,-1" fill="none" stroke="#e8e8ff" stroke-width="0.6" /></svg><svg style="position:absolute;left:1299.0px;top:97.0px" width="16" height="16" viewBox="0 0 16 16"><circle cx="6.9" cy="7" r="5.5" fill="#fff" stroke="#000" stroke-width="1.25"/><rect x="4.4" y="5.2" width="5" height="3.8" fill="#fff" stroke="#000" stroke-width="1.3"/><path d="M11.2,11.4 L14.8,15" fill="none" stroke="#000080" stroke-width="2.8" /><path d="M11.6,12.6 l1,-1 M13,14 l1,-1" fill="none" stroke="#e8e8ff" stroke-width="0.6" /></svg><svg style="position:absolute;left:1321.0px;top:97.0px" width="16" height="16" viewBox="0 0 16 16"><circle cx="6.6" cy="7" r="5.7" fill="none" stroke="#000" stroke-width="1.25"/><path d="M11,11.4 L14.2,14.8" fill="none" stroke="#000080" stroke-width="2.8" /><path d="M11.4,1.6 H14.6 V4.8 Z M0.4,11.4 V14.6 H3.6 Z" fill="#000" stroke="#000" stroke-width="0.3" /></svg><svg style="position:absolute;left:1343.0px;top:97.0px" width="16" height="16" viewBox="0 0 16 16"><rect x="0.6" y="1.6" width="15.2" height="14" fill="#fff" stroke="#000" stroke-width="1.2"/><rect x="2.6" y="3.6" width="11.2" height="10" fill="#30e0e8" stroke="#000" stroke-width="1.2"/><path d="M3.4,5 H13 M3.4,7.2 H13 M3.4,9.4 H13 M3.4,11.6 H13" fill="none" stroke="#d8ffff" stroke-width="0.7" /><path d="M4.4,6 H10.6 M4.4,8.2 H8.4 M4.4,10.4 H11.4 M4.4,12.4 H8.8" fill="none" stroke="#000" stroke-width="1.1" /></svg><div style="position:absolute;left:-2px;top:119px;width:213px;height:27px;border-bottom:1px solid #a6a6a6;box-sizing:border-box;border-right:1px solid #a6a6a6;"></div><svg style="position:absolute;left:13.0px;top:125.0px" width="16" height="16" viewBox="0 0 16 16"><path d="M1,0.8 H10.6 L14.2,4.4 V14.8 H1 Z" fill="#ffff00" stroke="#707070" stroke-width="1" /><path d="M14.4,4.4 V15 H1.2" fill="none" stroke="#000" stroke-width="1.2" /><path d="M10.6,0.8 V4.4 H14.2" fill="#fff" stroke="#888" stroke-width="0.8" /><rect x="6.6" y="4" width="4.4" height="4.4" fill="#e01010" stroke="#900" stroke-width="0.6"/><circle cx="5" cy="8.4" r="2.1" fill="#00c800" stroke="#006000" stroke-width="0.7"/><path d="M15.2,4.8 L8.6,11.4" fill="none" stroke="#0030ff" stroke-width="2" /><path d="M8.8,11 L7.4,12.6" fill="none" stroke="#f0e8c0" stroke-width="1.6" /><path d="M1.6,14 L7.6,9.6" fill="none" stroke="#e00000" stroke-width="1.5" /></svg><svg style="position:absolute;left:35.0px;top:125.0px" width="16" height="16" viewBox="0 0 16 16"><path d="M2.4,2.6 H14.8 L8.8,8.2 L14.8,13.6 H2.4 L4.8,8.2 Z" fill="none" stroke="#000" stroke-width="1.25" /></svg><svg style="position:absolute;left:58.0px;top:125.0px" width="16" height="16" viewBox="0 0 16 16"><path d="M7.4,2.4 Q13.6,3 13.6,7.2 Q13.6,11.2 7.4,12" fill="none" stroke="#000" stroke-width="1.25" /></svg><svg style="position:absolute;left:79.0px;top:125.0px" width="16" height="16" viewBox="0 0 16 16"><ellipse cx="7.4" cy="7.5" rx="7" ry="4.1" fill="none" stroke="#000" stroke-width="1.25"/></svg><svg style="position:absolute;left:101.0px;top:125.0px" width="16" height="16" viewBox="0 0 16 16"><rect x="3.6" y="3.8" width="10.4" height="9.2" fill="none" stroke="#000" stroke-width="1.3"/></svg><svg style="position:absolute;left:123.0px;top:125.0px" width="16" height="16" viewBox="0 0 16 16"><path d="M1.2,2.4 H14 L2.2,8.6 L14,13.4" fill="none" stroke="#000" stroke-width="1.2" /></svg><svg style="position:absolute;left:145.0px;top:125.0px" width="16" height="16" viewBox="0 0 16 16"><path d="M3,3.2 L13.8,13.4" fill="none" stroke="#000" stroke-width="1.9" /></svg><svg style="position:absolute;left:167.0px;top:125.0px" width="16" height="16" viewBox="0 0 16 16"><text x="8.2" y="13" font-size="14.5" font-weight="bold" fill="#000" style="font-family:'Liberation Serif'" text-anchor="middle">A</text></svg><svg style="position:absolute;left:189.0px;top:125.0px" width="16" height="16" viewBox="0 0 16 16"><defs><linearGradient id="ng" x1="0" y1="0" x2="0.6" y2="1"><stop offset="0" stop-color="#fffff0"/><stop offset="1" stop-color="#ffff10"/></linearGradient></defs><path d="M1.4,0.6 H10 L14,4.6 V14.8 H1.4 Z" fill="url(#ng)" stroke="#a8a8a8" stroke-width="1" /><path d="M7.2,3.4 Q8,0.8 11,1.4 L14,4.6 V8 H11.4 L10.8,6.8 L8,7.6 Z" fill="#a8a8a8" stroke="none" stroke-width="1" /><path d="M8,3.4 Q9,1.6 10.8,2.2 L12.2,3.6 L9,5.6 Z" fill="#f8f8f8" stroke="none" stroke-width="1" /></svg>
<div style="position:absolute;left:0px;top:145px;width:1340px;height:1px;background:#e4e4e4"></div><div style="position:absolute;left:0px;top:146px;width:1340px;height:1px;background:#6c6c6c"></div><div style="position:absolute;left:0px;top:147px;width:1340px;height:4px;background:#f9f9f9"></div><div style="position:absolute;left:0px;top:151px;width:1317px;height:518px;background:#ababab"></div><div style="position:absolute;left:0px;top:151px;width:4px;height:518px;background:#f4f4f4"></div><div style="position:absolute;left:966px;top:151px;width:14px;height:518px;background:linear-gradient(90deg,#6a6a6a,#8e8e8e 50%,#ababab)"></div><div style="position:absolute;left:3px;top:151px;width:1314px;height:1px;background:#6c6c6c"></div><div style="position:absolute;left:1317px;top:150px;width:17px;height:519px;background:#f0f0f0;border-left:1px solid #e0e0e0;box-sizing:border-box"></div><svg style="position:absolute;left:1320px;top:156px" width="10" height="8" viewBox="0 0 10 8"><path d="M1.5,6.5 L5,2.5 L8.5,6.5 Z" fill="#505050"/></svg><div style="position:absolute;left:1318px;top:170px;width:14px;height:500px;border:1px solid #a8a8a8;border-radius:2px;background:linear-gradient(90deg,#f8f8f8,#e4e4e4 50%,#d0d0d0);box-sizing:border-box"></div><div style="position:absolute;left:1334px;top:147px;width:4px;height:522px;background:#f0f0f0"></div><div style="position:absolute;left:1338px;top:147px;width:1px;height:522px;background:#a0a0a0"></div><div style="position:absolute;left:1339px;top:147px;width:1px;height:522px;background:#fff"></div><div style="position:absolute;left:1340px;top:147px;width:23px;height:522px;background:#f0f0f0"></div><svg style="position:absolute;left:1343.0px;top:161.0px" width="16" height="16" viewBox="0 0 16 16"><rect x="1" y="1.6" width="2" height="6" fill="#f0e000" stroke="none" stroke-width="1"/><rect x="13" y="1.6" width="2" height="6" fill="#f0e000" stroke="none" stroke-width="1"/><rect x="4" y="1" width="8" height="5" fill="#00d0e0" stroke="none" stroke-width="1"/><path d="M6,2 L9,3.4 L6,4.8 Z M9.4,2 L11,3.4 L9.4,4.8" fill="none" stroke="#000" stroke-width="0.8" /><rect x="3.4" y="6" width="9.6" height="8" fill="#fff" stroke="#000" stroke-width="1"/><circle cx="8" cy="10" r="2.4" fill="#fff" stroke="#000" stroke-width="1"/><path d="M8,10 L9.6,8.6" fill="none" stroke="#000" stroke-width="0.9" /><path d="M2,3 V12 Q2,14 4,13.4" fill="none" stroke="#000" stroke-width="1.6" /><path d="M14.2,3 V12 Q14,14 12,13.4" fill="none" stroke="#e00000" stroke-width="1.7" /><rect x="10.6" y="12.6" width="1.6" height="1.4" fill="#e00000" stroke="none" stroke-width="1"/><rect x="4.4" y="12.6" width="1.4" height="1.4" fill="#000" stroke="none" stroke-width="1"/></svg><svg style="position:absolute;left:1343.0px;top:182.0px" width="16" height="16" viewBox="0 0 16 16"><rect x="0.6" y="0.6" width="14.8" height="14.6" fill="#f8f8f8" stroke="#c8c8c8" stroke-width="0.8"/><rect x="1.2" y="1" width="13.6" height="6" fill="#00c000" stroke="none" stroke-width="1"/><path d="M1.4,5.4 L3.8,2.4 L6.2,5.4 L8.6,2.4 L11,5.4 L13.4,2.4 L14.6,4" fill="none" stroke="#000" stroke-width="0.9" /><path d="M4.6,9 h1.6 M7.2,9 h1.6 M9.8,9 h1.6" fill="none" stroke="#000" stroke-width="0.9" /><circle cx="4.2" cy="12.6" r="1.1" fill="#e00000" stroke="none" stroke-width="1"/><circle cx="8" cy="12.6" r="1.1" fill="#222" stroke="none" stroke-width="1"/><circle cx="11.8" cy="12.6" r="1.1" fill="#0000d0" stroke="none" stroke-width="1"/><path d="M2.4,12.6 H13.6" fill="none" stroke="#000" stroke-width="0.5" /></svg><svg style="position:absolute;left:1343.0px;top:204.0px" width="16" height="16" viewBox="0 0 16 16"><rect x="0.8" y="1" width="5.6" height="5" fill="#fff" stroke="#000" stroke-width="1"/><path d="M1.6,5.2 L5.4,1.8" fill="none" stroke="#e00000" stroke-width="1" /><rect x="9.6" y="1" width="5.6" height="5" fill="#fff" stroke="#000" stroke-width="1"/><path d="M10.4,1.8 L14.4,5.2" fill="none" stroke="#0000d0" stroke-width="1" /><path d="M1,12 H6.6" fill="none" stroke="#e00000" stroke-width="0.8" /><path d="M2,11 L4,13 M4,11 L2,13 M4.4,11 L6,13 M6,11 L4.4,13" fill="none" stroke="#800000" stroke-width="0.9" /><path d="M9.4,12 H15" fill="none" stroke="#0000d0" stroke-width="0.8" /><path d="M10.4,11 L12.4,13 M12.4,11 L10.4,13 M13,11 L14.6,13 M14.6,11 L13,13" fill="none" stroke="#000080" stroke-width="0.9" /><path d="M0.6,14.6 H15.4 V7" fill="none" stroke="#c8c8c8" stroke-width="0.7" /></svg><svg style="position:absolute;left:1343.0px;top:225.0px" width="16" height="16" viewBox="0 0 16 16"><rect x="0.6" y="0.6" width="14.8" height="14.6" fill="#f8f8f8" stroke="#c8c8c8" stroke-width="0.8"/><rect x="1" y="1" width="10.6" height="8.4" fill="#fff" stroke="#bbb" stroke-width="0.6"/><path d="M1.2,5 L3,2.4 L4.8,5 L6.6,2.4 L8.4,5 L10.2,2.4 L11.4,4" fill="none" stroke="#0030e0" stroke-width="1" /><path d="M1.2,8.4 L3,5.8 L4.8,8.4 L6.6,5.8 L8.4,8.4 L10.2,5.8 L11.4,7.4" fill="none" stroke="#e00000" stroke-width="1" /><path d="M12.4,2.4 H15 M13.7,1 V3.8" fill="none" stroke="#e00000" stroke-width="1.1" /><circle cx="13.6" cy="6.6" r="1.1" fill="none" stroke="#000" stroke-width="0.8"/><path d="M1,12.6 H6" fill="none" stroke="#0000c0" stroke-width="0.8" /><path d="M1.6,11.6 L3.2,13.6 M3.2,11.6 L1.6,13.6" fill="none" stroke="#000080" stroke-width="0.9" /><path d="M4,11.6 L5.6,13.6 M5.6,11.6 L4,13.6" fill="none" stroke="#c00000" stroke-width="0.9" /></svg><svg style="position:absolute;left:1343.0px;top:246.0px" width="16" height="16" viewBox="0 0 16 16"><rect x="0.6" y="0.6" width="14.8" height="14.6" fill="#f8f8f8" stroke="#c8c8c8" stroke-width="0.8"/><rect x="1" y="1" width="10.6" height="8.4" fill="#fff" stroke="#bbb" stroke-width="0.6"/><path d="M1.2,4.4 L3,1.8 L4.8,4.4 L6.6,1.8 L8.4,4.4 L10.2,1.8 L11.4,3.4" fill="none" stroke="#00a000" stroke-width="1" /><path d="M1.2,5.8 L3,3.2 L4.8,5.8 L6.6,3.2 L8.4,5.8 L10.2,3.2 L11.4,4.8" fill="none" stroke="#0030e0" stroke-width="1" /><path d="M1.2,7.2 L3,4.6 L4.8,7.2 L6.6,4.6 L8.4,7.2 L10.2,4.6 L11.4,6.2" fill="none" stroke="#e8c000" stroke-width="1" /><path d="M1.2,8.8 L3,6.2 L4.8,8.8 L6.6,6.2 L8.4,8.8 L10.2,6.2 L11.4,7.8" fill="none" stroke="#e00000" stroke-width="1" /><path d="M12.4,2.4 H15 M13.7,1 V3.8" fill="none" stroke="#e00000" stroke-width="1.1" /><circle cx="13.6" cy="6.6" r="1.1" fill="none" stroke="#000" stroke-width="0.8"/><path d="M1,12.6 H13" fill="none" stroke="#000" stroke-width="0.6" /><circle cx="2.2" cy="12.6" r="1" fill="#222" stroke="none" stroke-width="1"/><circle cx="4.800000000000001" cy="12.6" r="1" fill="#b08000" stroke="none" stroke-width="1"/><circle cx="7.4" cy="12.6" r="1" fill="#222" stroke="none" stroke-width="1"/><circle cx="10.0" cy="12.6" r="1" fill="#b08000" stroke="none" stroke-width="1"/><circle cx="12.600000000000001" cy="12.6" r="1" fill="#222" stroke="none" stroke-width="1"/></svg><svg style="position:absolute;left:1343.0px;top:267.0px" width="16" height="16" viewBox="0 0 16 16"><rect x="0.6" y="0.6" width="14.8" height="14.6" fill="#f8f8f8" stroke="#c8c8c8" stroke-width="0.8"/><rect x="1" y="1.2" width="10.6" height="7.6" fill="#00b050" stroke="none" stroke-width="1"/><path d="M1.6,3 Q4,3 5.4,7.4 M3,7.6 Q5,2 7,7.4 M6,3 H11 M6,5 H11 M6,7 H11" fill="none" stroke="#000" stroke-width="1.1" /><rect x="13.2" y="2.4" width="1.2" height="1.2" fill="#000" stroke="none" stroke-width="1"/><rect x="13.2" y="5" width="1.2" height="1.2" fill="#000" stroke="none" stroke-width="1"/><path d="M1,12.6 H13" fill="none" stroke="#000" stroke-width="0.6" /><circle cx="2.2" cy="12.6" r="1" fill="#222" stroke="none" stroke-width="1"/><circle cx="4.800000000000001" cy="12.6" r="1" fill="#c00000" stroke="none" stroke-width="1"/><circle cx="7.4" cy="12.6" r="1" fill="#222" stroke="none" stroke-width="1"/><circle cx="10.0" cy="12.6" r="1" fill="#c00000" stroke="none" stroke-width="1"/><circle cx="12.600000000000001" cy="12.6" r="1" fill="#222" stroke="none" stroke-width="1"/></svg><svg style="position:absolute;left:1343.0px;top:288.0px" width="16" height="16" viewBox="0 0 16 16"><rect x="0.6" y="0.6" width="14.8" height="14.6" fill="#f8f8f8" stroke="#c8c8c8" stroke-width="0.8"/><rect x="1" y="1" width="14" height="6.4" fill="#000" stroke="none" stroke-width="1"/><text x="2" y="6.4" font-size="6.4" font-weight="bold" fill="#00e000" style="font-family:'Liberation Mono'" text-anchor="start" textLength="12" lengthAdjust="spacingAndGlyphs">123</text></svg>
<svg style="position:absolute;left:0;top:147px" width="1317" height="521" viewBox="0 147 1317 521"><rect x="4" y="151" width="962" height="520" fill="#fff"/><defs><pattern id="gd" x="14" y="161" width="9" height="9" patternUnits="userSpaceOnUse"><rect x="0" y="0" width="1.15" height="1.15" fill="#000"/></pattern></defs><rect x="8" y="155" width="954" height="514" fill="url(#gd)"/><rect x="3.5" y="150.5" width="3.3" height="520" fill="#808080"/><rect x="3.5" y="150.5" width="962.5" height="3.3" fill="#808080"/><rect x="963" y="151" width="3" height="520" fill="#808080"/><rect x="24" y="154" width="2.6" height="520" fill="#808080"/><rect x="944" y="154" width="2.6" height="520" fill="#808080"/><rect x="7" y="171" width="956" height="2.6" fill="#808080"/><rect x="121" y="154" width="1" height="17" fill="#808080"/><rect x="217" y="154" width="1" height="17" fill="#808080"/><rect x="313" y="154" width="1" height="17" fill="#808080"/><rect x="409" y="154" width="1" height="17" fill="#808080"/><rect x="505" y="154" width="1" height="17" fill="#808080"/><rect x="601" y="154" width="1" height="17" fill="#808080"/><rect x="697" y="154" width="1" height="17" fill="#808080"/><rect x="793" y="154" width="1" height="17" fill="#808080"/><rect x="889" y="154" width="1" height="17" fill="#808080"/><rect x="7" y="268" width="17" height="1" fill="#808080"/><rect x="946" y="268" width="17" height="1" fill="#808080"/><rect x="7" y="364" width="17" height="1" fill="#808080"/><rect x="946" y="364" width="17" height="1" fill="#808080"/><rect x="7" y="460" width="17" height="1" fill="#808080"/><rect x="946" y="460" width="17" height="1" fill="#808080"/><rect x="7" y="556" width="17" height="1" fill="#808080"/><rect x="946" y="556" width="17" height="1" fill="#808080"/><rect x="7" y="652" width="17" height="1" fill="#808080"/><rect x="946" y="652" width="17" height="1" fill="#808080"/><text x="72" y="164.6" font-size="9" fill="#a8a8a8" text-anchor="middle">0</text><text x="168" y="164.6" font-size="9" fill="#a8a8a8" text-anchor="middle">1</text><text x="264" y="164.6" font-size="9" fill="#a8a8a8" text-anchor="middle">2</text><text x="360" y="164.6" font-size="9" fill="#a8a8a8" text-anchor="middle">3</text><text x="456" y="164.6" font-size="9" fill="#a8a8a8" text-anchor="middle">4</text><text x="552" y="164.6" font-size="9" fill="#a8a8a8" text-anchor="middle">5</text><text x="648" y="164.6" font-size="9" fill="#a8a8a8" text-anchor="middle">6</text><text x="744" y="164.6" font-size="9" fill="#a8a8a8" text-anchor="middle">7</text><text x="840" y="164.6" font-size="9" fill="#a8a8a8" text-anchor="middle">8</text><text x="15.5" y="219.6" font-size="9" fill="#a8a8a8" text-anchor="middle">A</text><text x="954.5" y="219.6" font-size="9" fill="#a8a8a8" text-anchor="middle">A</text><text x="15.5" y="315.6" font-size="9" fill="#a8a8a8" text-anchor="middle">B</text><text x="954.5" y="315.6" font-size="9" fill="#a8a8a8" text-anchor="middle">B</text><text x="15.5" y="411.6" font-size="9" fill="#a8a8a8" text-anchor="middle">C</text><text x="954.5" y="411.6" font-size="9" fill="#a8a8a8" text-anchor="middle">C</text><text x="15.5" y="507.6" font-size="9" fill="#a8a8a8" text-anchor="middle">D</text><text x="954.5" y="507.6" font-size="9" fill="#a8a8a8" text-anchor="middle">D</text><text x="15.5" y="603.6" font-size="9" fill="#a8a8a8" text-anchor="middle">E</text><text x="954.5" y="603.6" font-size="9" fill="#a8a8a8" text-anchor="middle">E</text></svg>
<div id="labels" style="position:absolute;left:0;top:0;width:966px;height:668px;overflow:hidden"><span class="t" style="left:169.00px;top:286.28px;font-size:13.33px;line-height:16px;color:#000;font-weight:bold;">V1</span><span class="t" style="left:168.50px;top:318.28px;font-size:13.33px;line-height:16px;color:#000;font-weight:bold;">220 Vrms</span><span class="t" style="left:168.50px;top:333.28px;font-size:13.33px;line-height:16px;color:#000;font-weight:bold;">50 Hz</span><span class="t" style="left:168.50px;top:348.28px;font-size:13.33px;line-height:16px;color:#000;font-weight:bold;">0°</span><span class="t" style="left:370.50px;top:300.28px;font-size:13.33px;line-height:16px;color:#000;font-weight:bold;">R1</span><span class="t" style="left:358.50px;top:329.28px;font-size:13.33px;line-height:16px;color:#000;font-weight:bold;">100Ω</span><span class="t" style="left:487.00px;top:300.28px;font-size:13.33px;line-height:16px;color:#000;font-weight:bold;">R2</span><span class="t" style="left:475.00px;top:329.28px;font-size:13.33px;line-height:16px;color:#000;font-weight:bold;">1mΩ</span><span class="t" style="left:496.00px;top:399.28px;font-size:13.33px;line-height:16px;color:#000;font-weight:bold;">R3</span><span class="t" style="left:484.00px;top:428.28px;font-size:13.33px;line-height:16px;color:#000;font-weight:bold;">1mΩ</span><span class="t" style="left:379.00px;top:394.28px;font-size:13.33px;line-height:16px;color:#000;font-weight:bold;">C1</span><span class="t" style="left:373.00px;top:434.28px;font-size:13.33px;line-height:16px;color:#000;font-weight:bold;">45µF</span><span class="t" style="left:757.00px;top:313.28px;font-size:13.33px;line-height:16px;color:#000;font-weight:bold;">C2</span><span class="t" style="left:752.00px;top:353.28px;font-size:13.33px;line-height:16px;color:#000;font-weight:bold;">5µF</span><span class="t" style="left:593.00px;top:301.28px;font-size:13.33px;line-height:16px;color:#000;font-weight:bold;">T1</span><span class="t" style="left:578.50px;top:460.28px;font-size:13.33px;line-height:16px;color:#000;font-weight:bold;">100:100:100</span><span class="t" style="left:865.00px;top:305.28px;font-size:13.33px;line-height:16px;color:#0000ff;font-weight:bold;">S1</span><span class="t" style="left:849.00px;top:346.28px;font-size:13.33px;line-height:16px;color:#0000ff;font-weight:bold;">Кл = A</span><span class="t" style="left:808.00px;top:190.24px;font-size:12.6px;line-height:15px;color:#000;font-family:'Liberation Mono', monospace;font-weight:bold;transform:scaleX(1.0250);">XSC1</span><span class="t" style="left:709.00px;top:347.04px;font-size:12.6px;line-height:15px;color:#000;font-family:'Liberation Mono', monospace;font-weight:bold;transform:scaleX(1.0250);">XMM7</span></div>
<svg style="position:absolute;left:0;top:147px" width="1317" height="521" viewBox="0 147 1317 521"><polyline points="149.5,314.5 176.5,314.5 176.5,323.5 356.5,323.5" fill="none" stroke="#ff0000" stroke-width="1" /><polyline points="402.5,323.5 474.5,323.5" fill="none" stroke="#ff0000" stroke-width="1" /><polyline points="518.5,323.5 564.5,323.5" fill="none" stroke="#ff0000" stroke-width="1" /><polyline points="536.5,323.5 536.5,287.5 644.5,287.5 644.5,323.5 788.5,323.5 788.5,305.5" fill="none" stroke="#ff0000" stroke-width="1" /><polyline points="257.5,323.5 257.5,422.5 366.5,422.5" fill="none" stroke="#ff0000" stroke-width="1" /><polyline points="410.5,422.5 482.5,422.5" fill="none" stroke="#ff0000" stroke-width="1" /><polyline points="527.5,422.5 564.5,422.5" fill="none" stroke="#ff0000" stroke-width="1" /><polyline points="464.5,422.5 464.5,476.5 815.5,476.5 815.5,305.5" fill="none" stroke="#ff0000" stroke-width="1" /><polyline points="536.5,422.5 536.5,485.5 824.5,485.5 824.5,305.5" fill="none" stroke="#ff0000" stroke-width="1" /><polyline points="564.5,359.5 194.5,359.5 194.5,566.5" fill="none" stroke="#ff0000" stroke-width="1" /><polyline points="564.5,458.5 194.5,458.5" fill="none" stroke="#ff0000" stroke-width="1" /><polyline points="149.5,368.5 149.5,557.5 194.5,557.5" fill="none" stroke="#ff0000" stroke-width="1" /><polyline points="635.5,323.5 635.5,332.5 644.5,332.5 644.5,341.5 744.5,341.5" fill="none" stroke="#ff0000" stroke-width="1" /><polyline points="644.5,341.5 644.5,413.5 716.5,413.5" fill="none" stroke="#ff0000" stroke-width="1" /><polyline points="789.5,341.5 842.5,341.5" fill="none" stroke="#ff0000" stroke-width="1" /><polyline points="905.5,341.5 905.5,422.5 635.5,422.5 635.5,359.5" fill="none" stroke="#ff0000" stroke-width="1" /><polyline points="734.5,413.5 734.5,422.5" fill="none" stroke="#ff0000" stroke-width="1" /><polyline points="455.5,323.5 455.5,296.5 572.5,296.5 572.5,314.5 779.5,314.5 779.5,305.5" fill="none" stroke="#ffff00" stroke-width="1" /><circle cx="257.5" cy="323.5" r="2.15" fill="#ff0000"/><circle cx="536.5" cy="323.5" r="2.15" fill="#ff0000"/><circle cx="464.5" cy="422.5" r="2.15" fill="#ff0000"/><circle cx="536.5" cy="422.5" r="2.15" fill="#ff0000"/><circle cx="194.5" cy="458.5" r="2.15" fill="#ff0000"/><circle cx="194.5" cy="557.5" r="2.15" fill="#ff0000"/><circle cx="644.5" cy="341.5" r="2.15" fill="#ff0000"/><circle cx="734.5" cy="422.5" r="2.15" fill="#ff0000"/><circle cx="455.5" cy="323.5" r="2.0" fill="#ff3000"/><polyline points="149.5,314.5 149.5,323.5" fill="none" stroke="#000" stroke-width="1" /><polyline points="149.5,359.5 149.5,368.5" fill="none" stroke="#000" stroke-width="1" /><circle cx="149.4" cy="341.1" r="17.3" fill="none" stroke="#000" stroke-width="1.1"/><polyline points="146.5,329.5 152.5,329.5" fill="none" stroke="#000" stroke-width="1" /><polyline points="149.5,326.5 149.5,332.5" fill="none" stroke="#000" stroke-width="1" /><polyline points="146.5,353.5 152.5,353.5" fill="none" stroke="#000" stroke-width="1" /><path d="M143.5,342.5 q3,-5.5 6,-1 q3,4.5 6,-1" fill="none" stroke="#000" stroke-width="1.1"/><polyline points="194.5,566.5 194.5,575.5" fill="none" stroke="#000" stroke-width="1" /><polyline points="185.5,575.5 204.5,575.5" fill="none" stroke="#000" stroke-width="1" /><polyline points="189.5,578.5 200.5,578.5" fill="none" stroke="#000" stroke-width="1" /><polyline points="192.5,581.5 197.5,581.5" fill="none" stroke="#000" stroke-width="1" /><polyline points="356.5,323.5 365.5,323.5 367.8,319.5 372.4,327.5 377.0,319.5 381.6,327.5 386.2,319.5 390.8,327.5 393.1,323.5 402.5,323.5" fill="none" stroke="#000" stroke-width="1.1" stroke-linejoin="miter"/><polyline points="474.5,323.5 482.5,323.5 484.8,319.5 489.4,327.5 494.0,319.5 498.6,327.5 503.2,319.5 507.8,327.5 510.1,323.5 518.5,323.5" fill="none" stroke="#000" stroke-width="1.1" stroke-linejoin="miter"/><polyline points="482.5,422.5 491.0,422.5 493.3,418.5 497.9,426.5 502.5,418.5 507.1,426.5 511.7,418.5 516.3,426.5 518.6,422.5 527.5,422.5" fill="none" stroke="#000" stroke-width="1.1" stroke-linejoin="miter"/><polyline points="366.5,422.5 384.5,422.5" fill="none" stroke="#000" stroke-width="1" /><polyline points="391.5,422.5 410.5,422.5" fill="none" stroke="#000" stroke-width="1" /><rect x="384" y="413" width="2" height="19" fill="#000"/><rect x="390" y="413" width="2" height="19" fill="#000"/><polyline points="744.5,341.5 762.5,341.5" fill="none" stroke="#000" stroke-width="1" /><polyline points="769.5,341.5 789.5,341.5" fill="none" stroke="#000" stroke-width="1" /><rect x="762" y="332" width="2" height="19" fill="#000"/><rect x="768" y="332" width="2" height="19" fill="#000"/><polyline points="564.5,323.5 590.5,323.5" fill="none" stroke="#000" stroke-width="1" /><polyline points="564.5,359.5 590.5,359.5" fill="none" stroke="#000" stroke-width="1" /><polyline points="564.5,422.5 590.5,422.5" fill="none" stroke="#000" stroke-width="1" /><polyline points="564.5,458.5 590.5,458.5" fill="none" stroke="#000" stroke-width="1" /><polyline points="608.5,323.5 635.5,323.5" fill="none" stroke="#000" stroke-width="1" /><polyline points="608.5,359.5 635.5,359.5" fill="none" stroke="#000" stroke-width="1" /><path d="M589.5,323.5 c4.64,-0.6 4.64,6.6 0,6 c-3.60,-2 -3.60,1.4 0,0 c4.64,-0.6 4.64,6.6 0,6 c-3.60,-2 -3.60,1.4 0,0 c4.64,-0.6 4.64,6.6 0,6 c-3.60,-2 -3.60,1.4 0,0 c4.64,-0.6 4.64,6.6 0,6 c-3.60,-2 -3.60,1.4 0,0 c4.64,-0.6 4.64,6.6 0,6 c-3.60,-2 -3.60,1.4 0,0 c4.64,-0.6 4.64,6.6 0,6" fill="none" stroke="#000" stroke-width="1.25" stroke-linejoin="round"/><path d="M589.5,422.5 c4.64,-0.6 4.64,6.6 0,6 c-3.60,-2 -3.60,1.4 0,0 c4.64,-0.6 4.64,6.6 0,6 c-3.60,-2 -3.60,1.4 0,0 c4.64,-0.6 4.64,6.6 0,6 c-3.60,-2 -3.60,1.4 0,0 c4.64,-0.6 4.64,6.6 0,6 c-3.60,-2 -3.60,1.4 0,0 c4.64,-0.6 4.64,6.6 0,6 c-3.60,-2 -3.60,1.4 0,0 c4.64,-0.6 4.64,6.6 0,6" fill="none" stroke="#000" stroke-width="1.25" stroke-linejoin="round"/><path d="M609.5,323.5 c-4.64,-0.6 -4.64,6.6 0,6 c3.60,-2 3.60,1.4 0,0 c-4.64,-0.6 -4.64,6.6 0,6 c3.60,-2 3.60,1.4 0,0 c-4.64,-0.6 -4.64,6.6 0,6 c3.60,-2 3.60,1.4 0,0 c-4.64,-0.6 -4.64,6.6 0,6 c3.60,-2 3.60,1.4 0,0 c-4.64,-0.6 -4.64,6.6 0,6 c3.60,-2 3.60,1.4 0,0 c-4.64,-0.6 -4.64,6.6 0,6" fill="none" stroke="#000" stroke-width="1.25" stroke-linejoin="round"/><polyline points="596.5,323.5 596.5,458.5" fill="none" stroke="#000" stroke-width="1" /><polyline points="602.5,323.5 602.5,458.5" fill="none" stroke="#000" stroke-width="1" /><polyline points="842.5,341.5 854.5,341.5" fill="none" stroke="#0000ff" stroke-width="1" /><polyline points="893.5,341.5 905.5,341.5" fill="none" stroke="#0000ff" stroke-width="1" /><circle cx="857" cy="341.5" r="2.6" fill="#fff" stroke="#0000ff" stroke-width="1"/><circle cx="890.5" cy="341.5" r="2.6" fill="#fff" stroke="#0000ff" stroke-width="1"/><line x1="859" y1="340" x2="887.5" y2="323.5" stroke="#0000ff" stroke-width="1.1"/><rect x="770.5" y="224.5" width="98" height="71" fill="#bddcbc" stroke="none"/><path d="M868.5,224.5 H770.5 V295.5 H868.5" fill="none" stroke="#222" stroke-width="1"/><path d="M868.5,224.5 V295.5" fill="none" stroke="#555" stroke-width="1" stroke-dasharray="5,4"/><rect x="773.5" y="227.5" width="62" height="44" fill="#bebebe" stroke="#fff" stroke-width="1"/><path d="M777.5,249.5 C783,222 797,222 802.5,249 C808,277.5 823,277.5 828.5,248" fill="none" stroke="#000" stroke-width="1"/><path d="M777.5,249.5 C783,231.7 797,231.7 802.5,249 C808,266.7 823,266.7 828.5,248" fill="none" stroke="#000" stroke-width="1"/><circle cx="779.5" cy="288" r="3.4" fill="#888" stroke="#000" stroke-width="1"/><circle cx="779.5" cy="288" r="1.6" fill="#000"/><circle cx="815.5" cy="288" r="3.4" fill="#888" stroke="#000" stroke-width="1"/><circle cx="815.5" cy="288" r="1.6" fill="#000"/><circle cx="860.5" cy="260.5" r="3.4" fill="#888" stroke="#000" stroke-width="1"/><circle cx="860.5" cy="260.5" r="1.6" fill="#000"/><polyline points="779.5,291.5 779.5,305.5" fill="none" stroke="#000" stroke-width="1" /><polyline points="782.5,288.5 788.5,288.5 788.5,305.5" fill="none" stroke="#000" stroke-width="1" /><polyline points="815.5,291.5 815.5,305.5" fill="none" stroke="#000" stroke-width="1" /><polyline points="818.5,288.5 824.5,288.5 824.5,305.5" fill="none" stroke="#000" stroke-width="1" /><polyline points="863.5,260.5 878.5,260.5" fill="none" stroke="#000" stroke-width="1" /><polyline points="860.5,263.5 860.5,269.5 878.5,269.5" fill="none" stroke="#000" stroke-width="1" /><text x="777" y="282.5" font-size="6.5" fill="#333">A</text><text x="813" y="281.5" font-size="6.5" fill="#333">B</text><text x="843" y="252" font-size="6.6" fill="#444" textLength="25">Ext Trig</text><text x="773" y="294" font-size="5" fill="#777">+</text><text x="790" y="294" font-size="6" fill="#555">_</text><text x="809" y="294" font-size="5" fill="#777">+</text><text x="826" y="294" font-size="6" fill="#555">_</text><text x="865" y="257" font-size="5" fill="#777">+</text><text x="863" y="273" font-size="6" fill="#555">_</text><rect x="707.5" y="365.5" width="35" height="38.5" fill="#bddcbc" stroke="#222" stroke-width="1"/><rect x="711.5" y="369.5" width="27" height="13" fill="#bebebe" stroke="#e8e8e8" stroke-width="1"/><path d="M714,381.5 Q725,375 736,381.5" fill="none" stroke="#000" stroke-width="1"/><line x1="726" y1="383" x2="731.5" y2="371" stroke="#000" stroke-width="1"/><polyline points="713.5,389.5 719.5,389.5" fill="none" stroke="#000" stroke-width="1" /><polyline points="716.5,386.5 716.5,392.5" fill="none" stroke="#000" stroke-width="1" /><polyline points="731.5,389.5 737.5,389.5" fill="none" stroke="#000" stroke-width="1" /><circle cx="716.5" cy="398" r="2.6" fill="#999" stroke="#000" stroke-width="1"/><circle cx="734.5" cy="398" r="2.6" fill="#999" stroke="#000" stroke-width="1"/><polyline points="716.5,401.5 716.5,413.5" fill="none" stroke="#000" stroke-width="1" /><polyline points="734.5,401.5 734.5,413.5" fill="none" stroke="#000" stroke-width="1" /></svg>
<div style="position:absolute;left:0px;top:668px;width:1340px;height:2px;background:#fafafa"></div><div style="position:absolute;left:0px;top:670px;width:1363px;height:31px;background:#f0f0f0"></div><div style="position:absolute;left:236px;top:675px;width:1104px;height:1px;background:#5e5e5e"></div><div style="position:absolute;left:1px;top:675px;width:235.5px;height:24px;background:#f0f0f0;border:1.6px solid #000;border-top:none;border-left:1px solid #fff;border-radius:0 0 3px 2px;box-sizing:border-box"></div><div style="position:absolute;left:0px;top:675px;width:2px;height:22px;background:#f0f0f0"></div><div style="position:absolute;left:0px;top:675px;width:1px;height:1px;background:#5e5e5e"></div><svg style="position:absolute;left:6.0px;top:679.0px" width="16" height="16" viewBox="0 0 16 16"><path d="M1.5,1.5 H10 L14.5,6 V14.5 H1.5 Z" fill="#fff" stroke="#000" stroke-width="1.2" /><path d="M10,1.5 V6 H14.5" fill="none" stroke="#000" stroke-width="1" /><path d="M3.5,4.5 H6.5 M3.5,4.5 V12 M3.5,8.5 H6" fill="none" stroke="#f00" stroke-width="1.2" /><path d="M6.5,3.5 L9,4.8 L6.5,6 Z M6,8 l2.5,2.5 M8.5,8 l-2.5,2.5" fill="none" stroke="#000" stroke-width="1" /><path d="M2.5,13.5 l1.5,-1.5" fill="none" stroke="#f00" stroke-width="1" /></svg><span class="t" style="left:26.00px;top:679.74px;font-size:12.3px;line-height:15px;color:#000;transform:scaleX(0.9682);">Резистор и конденсатор в первичке *</span><div style="position:absolute;left:0px;top:700px;width:1340px;height:1px;background:#747474"></div><div style="position:absolute;left:0px;top:701px;width:1340px;height:1px;background:#fbfbfb"></div><div style="position:absolute;left:0px;top:702px;width:1340px;height:17px;background:#f0eded"></div><span class="t" style="left:1.50px;top:703.94px;font-size:12.3px;line-height:15px;color:#000;transform:scaleX(0.9412);">Для вызова справки нажать F1</span><div style="position:absolute;left:824px;top:703px;width:1px;height:16px;background:#dcdcdc"></div><span class="t" style="left:747.00px;top:704.19px;font-size:11px;line-height:13px;color:#000;">-</span>
<div style="position:absolute;left:1001px;top:294px;width:380px;height:440px;background:linear-gradient(180deg,#e4ecf5,#dbe5f1 30px,#dde6f2);border:1px solid #4f5761;border-radius:7px 0 0 0;box-sizing:border-box;box-shadow:-1px 1px 9px 1px rgba(0,0,0,.55), inset 1px 1px 0 #f6f9fd"></div><span class="t" style="left:1009.00px;top:301.74px;font-size:12.3px;line-height:15px;color:#000;transform:scaleX(0.9309);">Осциллограф-XSC1</span><div style="position:absolute;left:1008px;top:323px;width:360px;height:400px;background:#f0f0f0;border-left:1px solid #8a97a8;border-top:1px solid #8a97a8;box-sizing:border-box"></div><div style="position:absolute;left:1009px;top:324px;width:360px;height:249px;background:#000;border-left:3px solid #7e7e7e;border-top:3px solid #7e7e7e;box-sizing:border-box"></div><svg style="position:absolute;left:1009px;top:324px" width="354" height="249" viewBox="1009 324 354 249"><line x1="1075.5" y1="336" x2="1075.5" y2="564" stroke="#e0e0e0" stroke-width="1" stroke-dasharray="4,3"/><line x1="1130.6" y1="336" x2="1130.6" y2="564" stroke="#e0e0e0" stroke-width="1" stroke-dasharray="4,3"/><line x1="1185.7" y1="336" x2="1185.7" y2="564" stroke="#e0e0e0" stroke-width="1" stroke-dasharray="4,3"/><line x1="1240.7" y1="336" x2="1240.7" y2="564" stroke="#e0e0e0" stroke-width="1" stroke-dasharray="4,3"/><line x1="1295.8" y1="336" x2="1295.8" y2="564" stroke="#e0e0e0" stroke-width="1" stroke-dasharray="4,3"/><line x1="1350.8" y1="336" x2="1350.8" y2="564" stroke="#e0e0e0" stroke-width="1" stroke-dasharray="4,3"/><line x1="1021" y1="373.7" x2="1363" y2="373.7" stroke="#e0e0e0" stroke-width="1" stroke-dasharray="4,3"/><line x1="1021" y1="411.7" x2="1363" y2="411.7" stroke="#e0e0e0" stroke-width="1" stroke-dasharray="4,3"/><line x1="1021" y1="487.7" x2="1363" y2="487.7" stroke="#e0e0e0" stroke-width="1" stroke-dasharray="4,3"/><line x1="1021" y1="525.7" x2="1363" y2="525.7" stroke="#e0e0e0" stroke-width="1" stroke-dasharray="4,3"/><line x1="1021" y1="335.7" x2="1363" y2="335.7" stroke="#fff" stroke-width="1.1"/><line x1="1021" y1="564.5" x2="1363" y2="564.5" stroke="#fff" stroke-width="1.1"/><line x1="1021" y1="450.2" x2="1363" y2="450.2" stroke="#fff" stroke-width="1.4"/><line x1="1020.5" y1="450" x2="1020.5" y2="452" stroke="#fff" stroke-width="0.7"/><line x1="1026.0" y1="450" x2="1026.0" y2="452" stroke="#fff" stroke-width="0.7"/><line x1="1031.5" y1="450" x2="1031.5" y2="452" stroke="#fff" stroke-width="0.7"/><line x1="1037.0" y1="450" x2="1037.0" y2="452" stroke="#fff" stroke-width="0.7"/><line x1="1042.5" y1="450" x2="1042.5" y2="452" stroke="#fff" stroke-width="0.7"/><line x1="1048.0" y1="450" x2="1048.0" y2="452" stroke="#fff" stroke-width="0.7"/><line x1="1053.5" y1="450" x2="1053.5" y2="452" stroke="#fff" stroke-width="0.7"/><line x1="1059.0" y1="450" x2="1059.0" y2="452" stroke="#fff" stroke-width="0.7"/><line x1="1064.5" y1="450" x2="1064.5" y2="452" stroke="#fff" stroke-width="0.7"/><line x1="1070.0" y1="450" x2="1070.0" y2="452" stroke="#fff" stroke-width="0.7"/><line x1="1075.5" y1="450" x2="1075.5" y2="452" stroke="#fff" stroke-width="0.7"/><line x1="1081.1" y1="450" x2="1081.1" y2="452" stroke="#fff" stroke-width="0.7"/><line x1="1086.6" y1="450" x2="1086.6" y2="452" stroke="#fff" stroke-width="0.7"/><line x1="1092.1" y1="450" x2="1092.1" y2="452" stroke="#fff" stroke-width="0.7"/><line x1="1097.6" y1="450" x2="1097.6" y2="452" stroke="#fff" stroke-width="0.7"/><line x1="1103.1" y1="450" x2="1103.1" y2="452" stroke="#fff" stroke-width="0.7"/><line x1="1108.6" y1="450" x2="1108.6" y2="452" stroke="#fff" stroke-width="0.7"/><line x1="1114.1" y1="450" x2="1114.1" y2="452" stroke="#fff" stroke-width="0.7"/><line x1="1119.6" y1="450" x2="1119.6" y2="452" stroke="#fff" stroke-width="0.7"/><line x1="1125.1" y1="450" x2="1125.1" y2="452" stroke="#fff" stroke-width="0.7"/><line x1="1130.6" y1="450" x2="1130.6" y2="452" stroke="#fff" stroke-width="0.7"/><line x1="1136.1" y1="450" x2="1136.1" y2="452" stroke="#fff" stroke-width="0.7"/><line x1="1141.6" y1="450" x2="1141.6" y2="452" stroke="#fff" stroke-width="0.7"/><line x1="1147.1" y1="450" x2="1147.1" y2="452" stroke="#fff" stroke-width="0.7"/><line x1="1152.6" y1="450" x2="1152.6" y2="452" stroke="#fff" stroke-width="0.7"/><line x1="1158.1" y1="450" x2="1158.1" y2="452" stroke="#fff" stroke-width="0.7"/><line x1="1163.6" y1="450" x2="1163.6" y2="452" stroke="#fff" stroke-width="0.7"/><line x1="1169.1" y1="450" x2="1169.1" y2="452" stroke="#fff" stroke-width="0.7"/><line x1="1174.6" y1="450" x2="1174.6" y2="452" stroke="#fff" stroke-width="0.7"/><line x1="1180.1" y1="450" x2="1180.1" y2="452" stroke="#fff" stroke-width="0.7"/><line x1="1185.7" y1="450" x2="1185.7" y2="452" stroke="#fff" stroke-width="0.7"/><line x1="1191.2" y1="450" x2="1191.2" y2="452" stroke="#fff" stroke-width="0.7"/><line x1="1196.7" y1="450" x2="1196.7" y2="452" stroke="#fff" stroke-width="0.7"/><line x1="1202.2" y1="450" x2="1202.2" y2="452" stroke="#fff" stroke-width="0.7"/><line x1="1207.7" y1="450" x2="1207.7" y2="452" stroke="#fff" stroke-width="0.7"/><line x1="1213.2" y1="450" x2="1213.2" y2="452" stroke="#fff" stroke-width="0.7"/><line x1="1218.7" y1="450" x2="1218.7" y2="452" stroke="#fff" stroke-width="0.7"/><line x1="1224.2" y1="450" x2="1224.2" y2="452" stroke="#fff" stroke-width="0.7"/><line x1="1229.7" y1="450" x2="1229.7" y2="452" stroke="#fff" stroke-width="0.7"/><line x1="1235.2" y1="450" x2="1235.2" y2="452" stroke="#fff" stroke-width="0.7"/><line x1="1240.7" y1="450" x2="1240.7" y2="452" stroke="#fff" stroke-width="0.7"/><line x1="1246.2" y1="450" x2="1246.2" y2="452" stroke="#fff" stroke-width="0.7"/><line x1="1251.7" y1="450" x2="1251.7" y2="452" stroke="#fff" stroke-width="0.7"/><line x1="1257.2" y1="450" x2="1257.2" y2="452" stroke="#fff" stroke-width="0.7"/><line x1="1262.7" y1="450" x2="1262.7" y2="452" stroke="#fff" stroke-width="0.7"/><line x1="1268.2" y1="450" x2="1268.2" y2="452" stroke="#fff" stroke-width="0.7"/><line x1="1273.7" y1="450" x2="1273.7" y2="452" stroke="#fff" stroke-width="0.7"/><line x1="1279.2" y1="450" x2="1279.2" y2="452" stroke="#fff" stroke-width="0.7"/><line x1="1284.7" y1="450" x2="1284.7" y2="452" stroke="#fff" stroke-width="0.7"/><line x1="1290.2" y1="450" x2="1290.2" y2="452" stroke="#fff" stroke-width="0.7"/><line x1="1295.8" y1="450" x2="1295.8" y2="452" stroke="#fff" stroke-width="0.7"/><line x1="1301.3" y1="450" x2="1301.3" y2="452" stroke="#fff" stroke-width="0.7"/><line x1="1306.8" y1="450" x2="1306.8" y2="452" stroke="#fff" stroke-width="0.7"/><line x1="1312.3" y1="450" x2="1312.3" y2="452" stroke="#fff" stroke-width="0.7"/><line x1="1317.8" y1="450" x2="1317.8" y2="452" stroke="#fff" stroke-width="0.7"/><line x1="1323.3" y1="450" x2="1323.3" y2="452" stroke="#fff" stroke-width="0.7"/><line x1="1328.8" y1="450" x2="1328.8" y2="452" stroke="#fff" stroke-width="0.7"/><line x1="1334.3" y1="450" x2="1334.3" y2="452" stroke="#fff" stroke-width="0.7"/><line x1="1339.8" y1="450" x2="1339.8" y2="452" stroke="#fff" stroke-width="0.7"/><line x1="1345.3" y1="450" x2="1345.3" y2="452" stroke="#fff" stroke-width="0.7"/><line x1="1350.8" y1="450" x2="1350.8" y2="452" stroke="#fff" stroke-width="0.7"/><line x1="1356.3" y1="450" x2="1356.3" y2="452" stroke="#fff" stroke-width="0.7"/><line x1="1361.8" y1="450" x2="1361.8" y2="452" stroke="#fff" stroke-width="0.7"/><line x1="1367.3" y1="450" x2="1367.3" y2="452" stroke="#fff" stroke-width="0.7"/><polyline points="1021.0,370.6 1022.0,369.2 1023.0,368.1 1024.0,367.2 1025.0,366.7 1026.0,366.3 1027.0,366.3 1028.0,366.6 1029.0,367.1 1030.0,367.9 1031.0,368.9 1032.0,370.3 1033.0,371.9 1034.0,373.7 1035.0,375.8 1036.0,378.1 1037.0,380.7 1038.0,383.5 1039.0,386.5 1040.0,389.7 1041.0,393.1 1042.0,396.8 1043.0,400.5 1044.0,404.5 1045.0,408.6 1046.0,412.8 1047.0,417.2 1048.0,421.6 1049.0,426.2 1050.0,430.8 1051.0,435.5 1052.0,440.2 1053.0,445.0 1054.0,449.8 1055.0,454.6 1056.0,459.4 1057.0,464.2 1058.0,468.9 1059.0,473.5 1060.0,478.1 1061.0,482.6 1062.0,486.9 1063.0,491.2 1064.0,495.3 1065.0,499.3 1066.0,503.1 1067.0,506.7 1068.0,510.2 1069.0,513.5 1070.0,516.5 1071.0,519.4 1072.0,522.0 1073.0,524.4 1074.0,526.5 1075.0,528.4 1076.0,530.0 1077.0,531.4 1078.0,532.5 1079.0,533.4 1080.0,533.9 1081.0,534.3 1082.0,534.3 1083.0,534.0 1084.0,533.5 1085.0,532.7 1086.0,531.7 1087.0,530.3 1088.0,528.7 1089.0,526.9 1090.0,524.8 1091.0,522.5 1092.0,519.9 1093.0,517.1 1094.0,514.1 1095.0,510.9 1096.0,507.5 1097.0,503.8 1098.0,500.1 1099.0,496.1 1100.0,492.0 1101.0,487.8 1102.0,483.4 1103.0,479.0 1104.0,474.4 1105.0,469.8 1106.0,465.1 1107.0,460.4 1108.0,455.6 1109.0,450.8 1110.0,446.0 1111.0,441.2 1112.0,436.4 1113.0,431.7 1114.0,427.1 1115.0,422.5 1116.0,418.0 1117.0,413.7 1118.0,409.4 1119.0,405.3 1120.0,401.3 1121.0,397.5 1122.0,393.9 1123.0,390.4 1124.0,387.1 1125.0,384.1 1126.0,381.2 1127.0,378.6 1128.0,376.2 1129.0,374.1 1130.0,372.2 1131.0,370.6 1132.0,369.2 1133.0,368.1 1134.0,367.2 1135.0,366.7 1136.0,366.3 1137.0,366.3 1138.0,366.6 1139.0,367.1 1140.0,367.9 1141.0,368.9 1142.0,370.3 1143.0,371.9 1144.0,373.7 1145.0,375.8 1146.0,378.1 1147.0,380.7 1148.0,383.5 1149.0,386.5 1150.0,389.7 1151.0,393.1 1152.0,396.8 1153.0,400.5 1154.0,404.5 1155.0,408.6 1156.0,412.8 1157.0,417.2 1158.0,421.6 1159.0,426.2 1160.0,430.8 1161.0,435.5 1162.0,440.2 1163.0,445.0 1164.0,449.8 1165.0,454.6 1166.0,459.4 1167.0,464.2 1168.0,468.9 1169.0,473.5 1170.0,478.1 1171.0,482.6 1172.0,486.9 1173.0,491.2 1174.0,495.3 1175.0,499.3 1176.0,503.1 1177.0,506.7 1178.0,510.2 1179.0,513.5 1180.0,516.5 1181.0,519.4 1182.0,522.0 1183.0,524.4 1184.0,526.5 1185.0,528.4 1186.0,530.0 1187.0,531.4 1188.0,532.5 1189.0,533.4 1190.0,533.9 1191.0,534.3 1192.0,534.3 1193.0,534.0 1194.0,533.5 1195.0,532.7 1196.0,531.7 1197.0,530.3 1198.0,528.7 1199.0,526.9 1200.0,524.8 1201.0,522.5 1202.0,519.9 1203.0,517.1 1204.0,514.1 1205.0,510.9 1206.0,507.5 1207.0,503.8 1208.0,500.1 1209.0,496.1 1210.0,492.0 1211.0,487.8 1212.0,483.4 1213.0,479.0 1214.0,474.4 1215.0,469.8 1216.0,465.1 1217.0,460.4 1218.0,455.6 1219.0,450.8 1220.0,446.0 1221.0,441.2 1222.0,436.4 1223.0,431.7 1224.0,427.1 1225.0,422.5 1226.0,418.0 1227.0,413.7 1228.0,409.4 1229.0,405.3 1230.0,401.3 1231.0,397.5 1232.0,393.9 1233.0,390.4 1234.0,387.1 1235.0,384.1 1236.0,381.2 1237.0,378.6 1238.0,376.2 1239.0,374.1 1240.0,372.2 1241.0,370.6 1242.0,369.2 1243.0,368.1 1244.0,367.2 1245.0,366.7 1246.0,366.3 1247.0,366.3 1248.0,366.6 1249.0,367.1 1250.0,367.9 1251.0,368.9 1252.0,370.3 1253.0,371.9 1254.0,373.7 1255.0,375.8 1256.0,378.1 1257.0,380.7 1258.0,383.5 1259.0,386.5 1260.0,389.7 1261.0,393.1 1262.0,396.8 1263.0,400.5 1264.0,404.5 1265.0,408.6 1266.0,412.8 1267.0,417.2 1268.0,421.6 1269.0,426.2 1270.0,430.8 1271.0,435.5 1272.0,440.2 1273.0,445.0 1274.0,449.8 1275.0,454.6 1276.0,459.4 1277.0,464.2 1278.0,468.9 1279.0,473.5 1280.0,478.1 1281.0,482.6 1282.0,486.9 1283.0,491.2 1284.0,495.3 1285.0,499.3 1286.0,503.1 1287.0,506.7 1288.0,510.2 1289.0,513.5 1290.0,516.5 1291.0,519.4 1292.0,522.0 1293.0,524.4 1294.0,526.5 1295.0,528.4 1296.0,530.0 1297.0,531.4 1298.0,532.5 1299.0,533.4 1300.0,533.9 1301.0,534.3 1302.0,534.3 1303.0,534.0 1304.0,533.5 1305.0,532.7 1306.0,531.7 1307.0,530.3 1308.0,528.7 1309.0,526.9 1310.0,524.8 1311.0,522.5 1312.0,519.9 1313.0,517.1 1314.0,514.1 1315.0,510.9 1316.0,507.5 1317.0,503.8 1318.0,500.1 1319.0,496.1 1320.0,492.0 1321.0,487.8 1322.0,483.4 1323.0,479.0 1324.0,474.4 1325.0,469.8 1326.0,465.1 1327.0,460.4 1328.0,455.6 1329.0,450.8 1330.0,446.0 1331.0,441.2 1332.0,436.4 1333.0,431.7 1334.0,427.1 1335.0,422.5 1336.0,418.0 1337.0,413.7 1338.0,409.4 1339.0,405.3 1340.0,401.3 1341.0,397.5 1342.0,393.9 1343.0,390.4 1344.0,387.1 1345.0,384.1 1346.0,381.2 1347.0,378.6 1348.0,376.2 1349.0,374.1 1350.0,372.2 1351.0,370.6 1352.0,369.2 1353.0,368.1 1354.0,367.2 1355.0,366.7 1356.0,366.3 1357.0,366.3 1358.0,366.6 1359.0,367.1 1360.0,367.9 1361.0,368.9 1362.0,370.3 1363.0,371.9" fill="none" stroke="#ff0000" stroke-width="1.15" stroke-linejoin="round"/><polyline points="1021.0,468.7 1022.0,465.5 1023.0,462.2 1024.0,458.8 1025.0,455.4 1026.0,452.0 1027.0,448.6 1028.0,445.2 1029.0,441.8 1030.0,438.4 1031.0,435.1 1032.0,431.9 1033.0,428.6 1034.0,425.5 1035.0,422.4 1036.0,419.5 1037.0,416.6 1038.0,413.8 1039.0,411.2 1040.0,408.7 1041.0,406.3 1042.0,404.1 1043.0,402.0 1044.0,400.1 1045.0,398.3 1046.0,396.7 1047.0,395.3 1048.0,394.1 1049.0,393.0 1050.0,392.2 1051.0,391.5 1052.0,391.0 1053.0,390.7 1054.0,390.6 1055.0,390.7 1056.0,391.0 1057.0,391.5 1058.0,392.2 1059.0,393.0 1060.0,394.1 1061.0,395.3 1062.0,396.7 1063.0,398.3 1064.0,400.1 1065.0,402.0 1066.0,404.1 1067.0,406.3 1068.0,408.7 1069.0,411.2 1070.0,413.8 1071.0,416.6 1072.0,419.5 1073.0,422.4 1074.0,425.5 1075.0,428.6 1076.0,431.9 1077.0,435.1 1078.0,438.4 1079.0,441.8 1080.0,445.2 1081.0,448.6 1082.0,452.0 1083.0,455.4 1084.0,458.8 1085.0,462.2 1086.0,465.5 1087.0,468.7 1088.0,472.0 1089.0,475.1 1090.0,478.2 1091.0,481.1 1092.0,484.0 1093.0,486.8 1094.0,489.4 1095.0,491.9 1096.0,494.3 1097.0,496.5 1098.0,498.6 1099.0,500.5 1100.0,502.3 1101.0,503.9 1102.0,505.3 1103.0,506.5 1104.0,507.6 1105.0,508.4 1106.0,509.1 1107.0,509.6 1108.0,509.9 1109.0,510.0 1110.0,509.9 1111.0,509.6 1112.0,509.1 1113.0,508.4 1114.0,507.6 1115.0,506.5 1116.0,505.3 1117.0,503.9 1118.0,502.3 1119.0,500.5 1120.0,498.6 1121.0,496.5 1122.0,494.3 1123.0,491.9 1124.0,489.4 1125.0,486.8 1126.0,484.0 1127.0,481.1 1128.0,478.2 1129.0,475.1 1130.0,472.0 1131.0,468.7 1132.0,465.5 1133.0,462.2 1134.0,458.8 1135.0,455.4 1136.0,452.0 1137.0,448.6 1138.0,445.2 1139.0,441.8 1140.0,438.4 1141.0,435.1 1142.0,431.9 1143.0,428.6 1144.0,425.5 1145.0,422.4 1146.0,419.5 1147.0,416.6 1148.0,413.8 1149.0,411.2 1150.0,408.7 1151.0,406.3 1152.0,404.1 1153.0,402.0 1154.0,400.1 1155.0,398.3 1156.0,396.7 1157.0,395.3 1158.0,394.1 1159.0,393.0 1160.0,392.2 1161.0,391.5 1162.0,391.0 1163.0,390.7 1164.0,390.6 1165.0,390.7 1166.0,391.0 1167.0,391.5 1168.0,392.2 1169.0,393.0 1170.0,394.1 1171.0,395.3 1172.0,396.7 1173.0,398.3 1174.0,400.1 1175.0,402.0 1176.0,404.1 1177.0,406.3 1178.0,408.7 1179.0,411.2 1180.0,413.8 1181.0,416.6 1182.0,419.5 1183.0,422.4 1184.0,425.5 1185.0,428.6 1186.0,431.9 1187.0,435.1 1188.0,438.4 1189.0,441.8 1190.0,445.2 1191.0,448.6 1192.0,452.0 1193.0,455.4 1194.0,458.8 1195.0,462.2 1196.0,465.5 1197.0,468.7 1198.0,472.0 1199.0,475.1 1200.0,478.2 1201.0,481.1 1202.0,484.0 1203.0,486.8 1204.0,489.4 1205.0,491.9 1206.0,494.3 1207.0,496.5 1208.0,498.6 1209.0,500.5 1210.0,502.3 1211.0,503.9 1212.0,505.3 1213.0,506.5 1214.0,507.6 1215.0,508.4 1216.0,509.1 1217.0,509.6 1218.0,509.9 1219.0,510.0 1220.0,509.9 1221.0,509.6 1222.0,509.1 1223.0,508.4 1224.0,507.6 1225.0,506.5 1226.0,505.3 1227.0,503.9 1228.0,502.3 1229.0,500.5 1230.0,498.6 1231.0,496.5 1232.0,494.3 1233.0,491.9 1234.0,489.4 1235.0,486.8 1236.0,484.0 1237.0,481.1 1238.0,478.2 1239.0,475.1 1240.0,472.0 1241.0,468.7 1242.0,465.5 1243.0,462.2 1244.0,458.8 1245.0,455.4 1246.0,452.0 1247.0,448.6 1248.0,445.2 1249.0,441.8 1250.0,438.4 1251.0,435.1 1252.0,431.9 1253.0,428.6 1254.0,425.5 1255.0,422.4 1256.0,419.5 1257.0,416.6 1258.0,413.8 1259.0,411.2 1260.0,408.7 1261.0,406.3 1262.0,404.1 1263.0,402.0 1264.0,400.1 1265.0,398.3 1266.0,396.7 1267.0,395.3 1268.0,394.1 1269.0,393.0 1270.0,392.2 1271.0,391.5 1272.0,391.0 1273.0,390.7 1274.0,390.6 1275.0,390.7 1276.0,391.0 1277.0,391.5 1278.0,392.2 1279.0,393.0 1280.0,394.1 1281.0,395.3 1282.0,396.7 1283.0,398.3 1284.0,400.1 1285.0,402.0 1286.0,404.1 1287.0,406.3 1288.0,408.7 1289.0,411.2 1290.0,413.8 1291.0,416.6 1292.0,419.5 1293.0,422.4 1294.0,425.5 1295.0,428.6 1296.0,431.9 1297.0,435.1 1298.0,438.4 1299.0,441.8 1300.0,445.2 1301.0,448.6 1302.0,452.0 1303.0,455.4 1304.0,458.8 1305.0,462.2 1306.0,465.5 1307.0,468.7 1308.0,472.0 1309.0,475.1 1310.0,478.2 1311.0,481.1 1312.0,484.0 1313.0,486.8 1314.0,489.4 1315.0,491.9 1316.0,494.3 1317.0,496.5 1318.0,498.6 1319.0,500.5 1320.0,502.3 1321.0,503.9 1322.0,505.3 1323.0,506.5 1324.0,507.6 1325.0,508.4 1326.0,509.1 1327.0,509.6 1328.0,509.9 1329.0,510.0 1330.0,509.9 1331.0,509.6 1332.0,509.1 1333.0,508.4 1334.0,507.6 1335.0,506.5 1336.0,505.3 1337.0,503.9 1338.0,502.3 1339.0,500.5 1340.0,498.6 1341.0,496.5 1342.0,494.3 1343.0,491.9 1344.0,489.4 1345.0,486.8 1346.0,484.0 1347.0,481.1 1348.0,478.2 1349.0,475.1 1350.0,472.0 1351.0,468.7 1352.0,465.5 1353.0,462.2 1354.0,458.8 1355.0,455.4 1356.0,452.0 1357.0,448.6 1358.0,445.2 1359.0,441.8 1360.0,438.4 1361.0,435.1 1362.0,431.9 1363.0,428.6" fill="none" stroke="#ffff00" stroke-width="1.15" stroke-linejoin="round"/><line x1="1020.6" y1="335" x2="1020.6" y2="565" stroke="#00ff00" stroke-width="1.2"/><path d="M1012,327 H1029.2 L1020.6,336 Z" fill="#ff00ff"/><path d="M1012,327 H1029.2 L1027.6,328.8 H1013.6 Z" fill="#00ffff"/><rect x="1019.3" y="329" width="2.6" height="3.4" fill="#f0e040"/><circle cx="1020.6" cy="469" r="2.7" fill="none" stroke="#ff00ff" stroke-width="1"/></svg><div style="position:absolute;left:1009px;top:573px;width:360px;height:18px;background:#f0f0f0"></div><svg style="position:absolute;left:1013px;top:577px" width="8" height="10" viewBox="0 0 8 10"><path d="M6,1 L2,5 L6,9 Z" fill="#505050"/></svg><div style="position:absolute;left:1009px;top:592px;width:59px;height:59px;background:#f0f0f0;border:1px solid;border-color:#fff #a0a0a0 #a0a0a0 #fff;box-sizing:border-box"></div><span class="t" style="left:1015.00px;top:599.68px;font-size:11.3px;line-height:14px;color:#000;transform:scaleX(0.8341);">T1</span><span class="t" style="left:1015.00px;top:614.08px;font-size:11.3px;line-height:14px;color:#000;transform:scaleX(0.8341);">T2</span><span class="t" style="left:1015.00px;top:634.08px;font-size:11.3px;line-height:14px;color:#000;transform:scaleX(0.9125);">T2-T1</span><div style="position:absolute;left:1035px;top:599px;width:13px;height:15px;border:1px solid #7a7a7a;border-radius:3px;background:linear-gradient(180deg,#fdfdfd,#ececec 55%,#cfcfcf);box-sizing:border-box"></div><div style="position:absolute;left:1052px;top:599px;width:13px;height:15px;border:1px solid #7a7a7a;border-radius:3px;background:linear-gradient(180deg,#fdfdfd,#ececec 55%,#cfcfcf);box-sizing:border-box"></div><div style="position:absolute;left:1035px;top:617px;width:13px;height:14px;border:1px solid #7a7a7a;border-radius:3px;background:linear-gradient(180deg,#fdfdfd,#ececec 55%,#cfcfcf);box-sizing:border-box"></div><div style="position:absolute;left:1052px;top:617px;width:13px;height:14px;border:1px solid #7a7a7a;border-radius:3px;background:linear-gradient(180deg,#fdfdfd,#ececec 55%,#cfcfcf);box-sizing:border-box"></div><svg style="position:absolute;left:1036.5px;top:602.0px" width="10" height="9" viewBox="0 0 10 9"><path d="M0.3,4.5 L4.8,0 V3 H9.8 V6 H4.8 V9 Z" fill="#000"/></svg><svg style="position:absolute;left:1053.5px;top:602.0px" width="10" height="9" viewBox="0 0 10 9"><path d="M9.7,4.5 L5.2,0 V3 H0.2 V6 H5.2 V9 Z" fill="#000"/></svg><svg style="position:absolute;left:1036.5px;top:619.5px" width="10" height="9" viewBox="0 0 10 9"><path d="M0.3,4.5 L4.8,0 V3 H9.8 V6 H4.8 V9 Z" fill="#000"/></svg><svg style="position:absolute;left:1053.5px;top:619.5px" width="10" height="9" viewBox="0 0 10 9"><path d="M9.7,4.5 L5.2,0 V3 H0.2 V6 H5.2 V9 Z" fill="#000"/></svg><div style="position:absolute;left:1070px;top:593px;width:300px;height:58px;background:#fff;border:1px solid;border-color:#8a8a8a #fff #fff #8a8a8a;box-sizing:border-box"></div><span class="t" style="left:1085.50px;top:593.58px;font-size:11.3px;line-height:14px;color:#000;transform:scaleX(0.8825);">Время</span><span class="t" style="left:1159.00px;top:593.58px;font-size:11.3px;line-height:14px;color:#000;transform:scaleX(0.9714);">Канал_A</span><span class="t" style="left:1239.00px;top:593.58px;font-size:11.3px;line-height:14px;color:#000;transform:scaleX(0.9496);">Канал_B</span><span class="t" style="left:1077.50px;top:606.58px;font-size:11.3px;line-height:14px;color:#000;transform:scaleX(0.9314);">765.065 ms</span><span class="t" style="left:1154.00px;top:606.58px;font-size:11.3px;line-height:14px;color:#000;transform:scaleX(0.9501);">-975.428 uV</span><span class="t" style="left:1243.00px;top:606.58px;font-size:11.3px;line-height:14px;color:#000;transform:scaleX(0.9200);">4.180 mV</span><span class="t" style="left:1077.50px;top:619.58px;font-size:11.3px;line-height:14px;color:#000;transform:scaleX(0.9314);">765.065 ms</span><span class="t" style="left:1154.00px;top:619.58px;font-size:11.3px;line-height:14px;color:#000;transform:scaleX(0.9501);">-975.428 uV</span><span class="t" style="left:1243.00px;top:619.58px;font-size:11.3px;line-height:14px;color:#000;transform:scaleX(0.9200);">4.180 mV</span><span class="t" style="left:1085.50px;top:632.58px;font-size:11.3px;line-height:14px;color:#000;transform:scaleX(0.9712);">0.000 s</span><span class="t" style="left:1165.50px;top:632.58px;font-size:11.3px;line-height:14px;color:#000;transform:scaleX(0.9370);">0.000 V</span><span class="t" style="left:1245.50px;top:632.58px;font-size:11.3px;line-height:14px;color:#000;transform:scaleX(0.9370);">0.000 V</span><div style="position:absolute;left:1011px;top:665px;width:132px;height:60px;border:1px solid #d5dfe5;border-radius:3px;box-sizing:border-box"></div><div style="position:absolute;left:1015.5px;top:658px;width:57px;height:14px;background:#f0f0f0"></div><span class="t" style="left:1017.50px;top:658.08px;font-size:11.3px;line-height:14px;color:#000;transform:scaleX(0.9934);">Развертка</span><div style="position:absolute;left:1145px;top:665px;width:127px;height:60px;border:1px solid #d5dfe5;border-radius:3px;box-sizing:border-box"></div><div style="position:absolute;left:1150.5px;top:658px;width:44.5px;height:14px;background:#f0f0f0"></div><span class="t" style="left:1152.50px;top:658.08px;font-size:11.3px;line-height:14px;color:#000;transform:scaleX(0.9493);">Канал A</span><div style="position:absolute;left:1274px;top:665px;width:100px;height:60px;border:1px solid #d5dfe5;border-radius:3px;box-sizing:border-box"></div><div style="position:absolute;left:1279.5px;top:658px;width:44.5px;height:14px;background:#f0f0f0"></div><span class="t" style="left:1281.50px;top:658.08px;font-size:11.3px;line-height:14px;color:#000;transform:scaleX(0.9493);">Канал B</span><span class="t" style="left:1011.50px;top:675.58px;font-size:11.3px;line-height:14px;color:#000;transform:scaleX(1.0039);">Шкала:</span><div style="position:absolute;left:1055.5px;top:671.5px;width:82px;height:19px;background:#fff;border:1px solid #e3e9ef;border-top-color:#abadb3;border-radius:1px;box-sizing:border-box"></div><span class="t" style="left:1061.50px;top:674.58px;font-size:11.3px;line-height:14px;color:#000;transform:scaleX(0.8958);">10 ms/Div</span><span class="t" style="left:1011.50px;top:696.08px;font-size:11.3px;line-height:14px;color:#000;transform:scaleX(0.9695);">задержка X</span><div style="position:absolute;left:1076.5px;top:692.5px;width:61px;height:19px;background:#fff;border:1px solid #e3e9ef;border-top-color:#abadb3;border-radius:1px;box-sizing:border-box"></div><span class="t" style="left:1082.00px;top:695.58px;font-size:11.3px;line-height:14px;color:#000;">0</span><span class="t" style="left:1146.50px;top:675.58px;font-size:11.3px;line-height:14px;color:#000;transform:scaleX(0.9651);">Шкала</span><div style="position:absolute;left:1185.5px;top:671.5px;width:84px;height:19px;background:#fff;border:1px solid #e3e9ef;border-top-color:#abadb3;border-radius:1px;box-sizing:border-box"></div><span class="t" style="left:1192.00px;top:674.58px;font-size:11.3px;line-height:14px;color:#000;transform:scaleX(0.9054);">2 mV/Div</span><span class="t" style="left:1146.50px;top:696.08px;font-size:11.3px;line-height:14px;color:#000;transform:scaleX(0.9123);">смещение Y</span><div style="position:absolute;left:1209.5px;top:692.5px;width:60px;height:19px;background:#fff;border:1px solid #e3e9ef;border-top-color:#abadb3;border-radius:1px;box-sizing:border-box"></div><span class="t" style="left:1215.50px;top:695.58px;font-size:11.3px;line-height:14px;color:#000;">0</span><span class="t" style="left:1275.50px;top:675.58px;font-size:11.3px;line-height:14px;color:#000;transform:scaleX(0.9651);">Шкала</span><div style="position:absolute;left:1315.5px;top:671.5px;width:60px;height:19px;background:#fff;border:1px solid #e3e9ef;border-top-color:#abadb3;border-radius:1px;box-sizing:border-box"></div><span class="t" style="left:1321.50px;top:674.58px;font-size:11.3px;line-height:14px;color:#000;transform:scaleX(0.9054);">2 mV/Div</span><span class="t" style="left:1275.50px;top:696.08px;font-size:11.3px;line-height:14px;color:#000;transform:scaleX(0.9123);">смещение Y</span><div style="position:absolute;left:1340px;top:692.5px;width:40px;height:19px;background:#fff;border:1px solid #e3e9ef;border-top-color:#abadb3;border-radius:1px;box-sizing:border-box"></div><span class="t" style="left:1346.00px;top:695.58px;font-size:11.3px;line-height:14px;color:#000;">0</span><div style="position:absolute;left:1017px;top:716px;width:25px;height:8px;border:1px solid #3c7fb1;border-radius:3px;background:#eaeaea;box-sizing:border-box"></div><div style="position:absolute;left:1044px;top:716px;width:26px;height:8px;border:1px solid #aaa;border-radius:3px;background:#eaeaea;box-sizing:border-box"></div><div style="position:absolute;left:1074px;top:716px;width:27px;height:8px;border:1px solid #aaa;border-radius:3px;background:#eaeaea;box-sizing:border-box"></div><div style="position:absolute;left:1104px;top:716px;width:27px;height:8px;border:1px solid #aaa;border-radius:3px;background:#eaeaea;box-sizing:border-box"></div><div style="position:absolute;left:1148px;top:716px;width:24px;height:8px;border:1px solid #aaa;border-radius:3px;background:#eaeaea;box-sizing:border-box"></div><div style="position:absolute;left:1175px;top:716px;width:24px;height:8px;border:1px solid #aaa;border-radius:3px;background:#eaeaea;box-sizing:border-box"></div><div style="position:absolute;left:1202px;top:716px;width:25px;height:8px;border:1px solid #3c7fb1;border-radius:3px;background:#eaeaea;box-sizing:border-box"></div><div style="position:absolute;left:1278px;top:716px;width:24px;height:8px;border:1px solid #888;border-radius:3px;background:#eaeaea;box-sizing:border-box"></div><div style="position:absolute;left:1305px;top:716px;width:22px;height:8px;border:1px solid #888;border-radius:3px;background:#eaeaea;box-sizing:border-box"></div><div style="position:absolute;left:1329px;top:716px;width:24px;height:8px;border:1px solid #3c7fb1;border-radius:3px;background:#eaeaea;box-sizing:border-box"></div>
<div style="position:absolute;left:0px;top:719px;width:1363px;height:36px;background:linear-gradient(90deg,#8ca2bf 0%,#90a6c3 17.5%,#b4c9e3 20.5%,#bcd1ea 25%,#b8cde7 60%,#a6bad5 74%,#8d9fb8 83%,#8393ab 100%)"></div><div style="position:absolute;left:0px;top:719px;width:1363px;height:1px;background:#5c6c84"></div><div style="position:absolute;left:0px;top:720px;width:1363px;height:1px;background:rgba(255,255,255,.45)"></div><svg style="position:absolute;left:6px;top:719px" width="40" height="36" viewBox="0 0 40 36"><defs><radialGradient id="orb" cx="50%" cy="35%" r="65%"><stop offset="0" stop-color="#7fc0ee"/><stop offset="0.55" stop-color="#2f78c0"/><stop offset="1" stop-color="#143a72"/></radialGradient></defs><circle cx="20" cy="19.5" r="18" fill="url(#orb)" stroke="#26436b" stroke-width="1.2"/><ellipse cx="20" cy="10" rx="13.5" ry="7.5" fill="rgba(255,255,255,.38)"/><path d="M11.5,12.5 q4,-2.5 7.5,-0.5 l-1.6,6.6 q-3.6,-1.9 -7.6,0.4 z" fill="#e8582a"/><path d="M20.5,12.6 q4,1.8 8,-0.6 l-1.7,6.7 q-4,2.4 -7.9,0.5 z" fill="#7cbf3f"/><path d="M9.4,20.5 q4,-2.5 7.6,-0.5 l-1.6,6.6 q-3.6,-1.9 -7.6,0.4 z" fill="#3d8fe0"/><path d="M18.4,20.6 q4,1.8 8,-0.6 l-1.7,6.7 q-4,2.4 -7.9,0.5 z" fill="#f3c11c"/></svg><div style="position:absolute;left:53px;top:724px;width:140px;height:30px;background:#f1f1f1"></div><div style="position:absolute;left:193px;top:724px;width:50px;height:30px;background:#2d8cf5"></div><span class="t" style="left:79.00px;top:729.98px;font-size:14.5px;line-height:17px;color:#8a8a8a;transform:scaleX(0.9333);">Поиск</span><span class="t" style="left:199.50px;top:729.65px;font-size:14px;line-height:17px;color:#fff;transform:scaleX(0.9136);">Найти</span><svg style="position:absolute;left:54px;top:727px" width="22" height="22" viewBox="0 0 32 32"><path d="M16,5.5 C23,5.5 27.5,10.5 27.5,18 H11.5 C12,21.5 14,23.3 17,23.3 C19.3,23.3 20.8,22.3 21.6,20.8 H27 C25.6,25.4 21.8,28 16.5,28 C9.8,28 5.5,23.3 5.5,16.8 C5.5,10.3 9.8,5.5 16,5.5 Z M11.6,14.5 H21.6 C21.2,11.6 19.3,10 16.6,10 C13.9,10 12.1,11.6 11.6,14.5 Z" fill="#1e8be6"/><path d="M5,23 C-1,32 8,32 17,25 C9,29.5 3.5,29 7,22 Z M26.5,8.5 C32,2 27,-0.5 19,4 C25,1.5 29,2.5 25.5,8 Z" fill="#1e8be6"/></svg><svg style="position:absolute;left:262px;top:721px" width="33" height="33" viewBox="0 0 32 32"><path d="M16,5.5 C23,5.5 27.5,10.5 27.5,18 H11.5 C12,21.5 14,23.3 17,23.3 C19.3,23.3 20.8,22.3 21.6,20.8 H27 C25.6,25.4 21.8,28 16.5,28 C9.8,28 5.5,23.3 5.5,16.8 C5.5,10.3 9.8,5.5 16,5.5 Z M11.6,14.5 H21.6 C21.2,11.6 19.3,10 16.6,10 C13.9,10 12.1,11.6 11.6,14.5 Z" fill="#35a0e8"/><path d="M4.5,22 C-3,33 8,33.5 18,25.5 C9,30.5 2.5,30 6.5,21.5 Z M26.5,8 C33.5,0 27,-2.5 17,4 C25,0.5 30,1.5 25.5,7.5 Z" fill="#f5c21e" stroke="#d9a30a" stroke-width=".5"/></svg><svg style="position:absolute;left:322px;top:722px" width="32" height="32" viewBox="0 0 32 32"><rect x="2" y="3" width="24" height="26" rx="3" fill="#b9d6ea" stroke="#6c9cc0"/><rect x="26" y="6" width="3" height="20" fill="#9cc0dc"/><circle cx="13.5" cy="16.5" r="9" fill="#f08a1d" stroke="#c9640c"/><circle cx="13.5" cy="16.5" r="6.4" fill="#fbb04a"/><path d="M11,11.8 L18.8,16.5 L11,21.2 Z" fill="#fff"/></svg><svg style="position:absolute;left:384px;top:722px" width="36" height="32" viewBox="0 0 36 32"><rect x="2" y="3" width="32" height="22" rx="2" fill="#3f86c8" stroke="#2b5f96"/><rect x="4" y="5" width="28" height="18" fill="#4aa0e0"/><circle cx="12" cy="12" r="5" fill="#dfeaf5"/><path d="M12,12 L12,7 A5,5 0 0 1 16.5,14 Z" fill="#f0a020"/><rect x="20" y="8" width="10" height="3" fill="#e6eef6"/><rect x="20" y="14" width="10" height="3" fill="#e6eef6"/><rect x="20" y="19" width="6" height="2.5" fill="#9be06a"/><ellipse cx="17" cy="28" rx="7" ry="3" fill="#c8ccd2" stroke="#9aa0a8"/></svg><svg style="position:absolute;left:448px;top:721px" width="34" height="34" viewBox="0 0 34 34"><path d="M17,2 L26,27 H8 Z" fill="#f48b00"/><path d="M13.6,11.5 H20.4 L22.3,17 H11.7 Z" fill="#f4f4f4"/><path d="M10.3,21 H23.7 L25.2,25.4 H8.8 Z" fill="#e8e8e8"/><path d="M4,27 H30 L31.5,33 H2.5 Z" fill="#f07c00"/></svg><svg style="position:absolute;left:507px;top:722px" width="40" height="32" viewBox="0 0 40 32"><rect x="2" y="9" width="7" height="17" fill="#c9ccd1" stroke="#8a8f98"/><rect x="8" y="3" width="28" height="20" rx="1.5" fill="#d9dce0" stroke="#80858e"/><rect x="10.5" y="5.5" width="23" height="15" fill="#0c3a18"/><path d="M11,16 l2,-6 2,7 2,-9 2,8 2,-5 2,6 2,-8 2,7 2,-4 2,3" fill="none" stroke="#39e05a" stroke-width="1.4"/><path d="M17,23 h10 l2,5 h-14 z" fill="#b7bbc2"/><ellipse cx="22" cy="29" rx="9" ry="2" fill="#9da2aa"/></svg><div style="position:absolute;left:559px;top:720px;width:59px;height:36px;border:1px solid rgba(80,100,130,.75);border-radius:3px;background:linear-gradient(180deg,rgba(255,255,255,.55),rgba(255,255,255,.25) 45%,rgba(255,255,255,.08) 50%,rgba(255,255,255,.2));box-sizing:border-box;box-shadow:inset 0 0 0 1px rgba(255,255,255,.5)"></div><div style="position:absolute;left:621px;top:720px;width:59px;height:36px;border:1px solid rgba(80,100,130,.75);border-radius:3px;background:linear-gradient(180deg,rgba(255,255,255,.55),rgba(255,255,255,.25) 45%,rgba(255,255,255,.08) 50%,rgba(255,255,255,.2));box-sizing:border-box;box-shadow:inset 0 0 0 1px rgba(255,255,255,.5)"></div><div style="position:absolute;left:683px;top:720px;width:59px;height:36px;border:1px solid rgba(80,100,130,.75);border-radius:3px;background:linear-gradient(180deg,rgba(255,255,255,.55),rgba(255,255,255,.25) 45%,rgba(255,255,255,.08) 50%,rgba(255,255,255,.2));box-sizing:border-box;box-shadow:inset 0 0 0 1px rgba(255,255,255,.5)"></div><div style="position:absolute;left:745px;top:720px;width:59px;height:36px;border:1px solid rgba(80,100,130,.75);border-radius:3px;background:linear-gradient(180deg,rgba(255,255,255,.55),rgba(255,255,255,.25) 45%,rgba(255,255,255,.08) 50%,rgba(255,255,255,.2));box-sizing:border-box;box-shadow:inset 0 0 0 1px rgba(255,255,255,.5)"></div><div style="position:absolute;left:807px;top:720px;width:59px;height:36px;border:1px solid rgba(80,100,130,.75);border-radius:3px;background:linear-gradient(180deg,rgba(255,255,255,.55),rgba(255,255,255,.25) 45%,rgba(255,255,255,.08) 50%,rgba(255,255,255,.2));box-sizing:border-box;box-shadow:inset 0 0 0 1px rgba(255,255,255,.5)"></div><svg style="position:absolute;left:571px;top:722px" width="34" height="34" viewBox="0 0 34 34"><circle cx="17" cy="17" r="16" fill="#fff"/><path d="M17,17 L3.14,9 A16,16 0 0 1 30.86,9 Z" fill="#e33b2e"/><path d="M17,17 L30.86,9 A16,16 0 0 1 17,33 Z" fill="#fcc934"/><path d="M17,17 L17,33 A16,16 0 0 1 3.14,9 Z" fill="#2da94f"/><circle cx="17" cy="17" r="7.4" fill="#fff"/><circle cx="17" cy="17" r="5.9" fill="#3b7ded"/></svg><svg style="position:absolute;left:635px;top:724px" width="31" height="30" viewBox="0 0 31 30"><rect x="0.5" y="0.5" width="30" height="29" rx="3" fill="#3a2f78"/><rect x="0.5" y="0.5" width="30" height="12" rx="3" fill="#4d4390"/><g stroke="#e9dfb0" stroke-width="1.5" fill="none"><path d="M3,5 H20"/><path d="M9,10 H22"/><path d="M3,15 H16"/><path d="M3,21 H11"/></g><g stroke="#d8dcf0" stroke-width="1.4"><path d="M15,26 V18"/><path d="M20,26 V16"/><path d="M25,26 V14"/></g><g fill="#f0c040"><rect x="20" y="3.5" width="5" height="3"/><rect x="22" y="8.5" width="5" height="3"/><rect x="16" y="13.5" width="4" height="3"/></g></svg><svg style="position:absolute;left:695px;top:722px" width="38" height="34" viewBox="0 0 38 34"><path d="M3,6 h11 l2,3 h18 v20 h-31 z" fill="#f3d67c" stroke="#c9a643"/><rect x="5" y="4" width="4" height="3" fill="#3aa04a"/><rect x="16" y="5.5" width="4" height="3" fill="#d23a2a"/><rect x="25" y="6.5" width="4" height="3" fill="#3a8ad2"/><path d="M3,13 h31 v18 h-31 z" fill="#f7e29a" stroke="#c9a643"/><path d="M9,33 v-10 q0,-3 3,-3 h13 q3,0 3,3 v10 h-4 v-6 h-11 v6 z" fill="#5aa6e4" stroke="#2e75b8"/></svg><svg style="position:absolute;left:760px;top:721px" width="40" height="35" viewBox="0 0 40 35"><path d="M14,1.5 C24,1.5 29.5,6.5 29.5,15 C29.5,23 24.5,28 15,28 L9,33.5 L9,27 C4,24.5 1.5,20.5 1.5,15 C1.5,6.5 6,1.5 14,1.5 Z" fill="#7b4fc4" stroke="#e9e2f6" stroke-width="1.4"/><path d="M8.5,9.5 q1.4,-2 2.8,-0.4 l1.6,2.3 q0.7,1.1 -0.5,2 q-0.9,0.9 0.8,3 q1.9,2 3,1.2 q1.2,-0.9 2.2,0 l2,1.7 q1.2,1.4 -0.8,2.7 q-2.4,1.3 -6.6,-2.2 q-5.9,-5.6 -4.5,-10.3 z" fill="#fff"/><g fill="none" stroke="#fff" stroke-width="1.3" stroke-linecap="round"><path d="M16.5,9.8 q3.2,0.4 3.6,3.6"/><path d="M16.8,7 q5.7,0.6 6.2,6.4"/><path d="M17,4.3 q8.2,0.9 8.9,9.2"/></g><circle cx="29.8" cy="25" r="9.3" fill="#ee2b24"/><text x="29.8" y="29" font-size="10.5" fill="#fff" text-anchor="middle" font-family="Liberation Sans" textLength="15" lengthAdjust="spacingAndGlyphs">561</text></svg><svg style="position:absolute;left:823px;top:723px" width="26" height="32" viewBox="0 0 26 32"><rect x="1" y="1" width="23" height="29" rx="2" fill="#c9e0f5" stroke="#4f86bd"/><rect x="3.5" y="3.5" width="18" height="2.5" fill="#f0a531"/><rect x="3.5" y="6.5" width="18" height="7" fill="#f5fbff" stroke="#7fa6cc" stroke-width=".6"/><text x="20" y="12.6" font-size="7" text-anchor="end" fill="#334" font-family="Liberation Mono">0</text><g fill="#fff" stroke="#6e9ccb" stroke-width=".5"><rect x="3.5" y="15.5" width="3.6" height="2.7"/><rect x="8.1" y="15.5" width="3.6" height="2.7"/><rect x="12.7" y="15.5" width="3.6" height="2.7"/><rect x="17.299999999999997" y="15.5" width="3.6" height="2.7"/><rect x="3.5" y="19.1" width="3.6" height="2.7"/><rect x="8.1" y="19.1" width="3.6" height="2.7"/><rect x="12.7" y="19.1" width="3.6" height="2.7"/><rect x="17.299999999999997" y="19.1" width="3.6" height="2.7"/><rect x="3.5" y="22.7" width="3.6" height="2.7"/><rect x="8.1" y="22.7" width="3.6" height="2.7"/><rect x="12.7" y="22.7" width="3.6" height="2.7"/><rect x="17.299999999999997" y="22.7" width="3.6" height="2.7"/><rect x="3.5" y="26.3" width="3.6" height="2.7"/><rect x="8.1" y="26.3" width="3.6" height="2.7"/><rect x="12.7" y="26.3" width="3.6" height="2.7"/><rect x="17.299999999999997" y="26.3" width="3.6" height="2.7"/></g><rect x="17.3" y="22.7" width="3.6" height="6.3" fill="#f0a531"/></svg><span class="t" style="left:1151.50px;top:729.74px;font-size:12.3px;line-height:15px;color:#fff;transform:scaleX(0.8443);">RU</span><svg style="position:absolute;left:1181px;top:736px" width="12" height="8" viewBox="0 0 12 8"><path d="M1,7 L6,1.5 L11,7 Z" fill="#fff" stroke="#d0d8e4" stroke-width=".6"/></svg><svg style="position:absolute;left:1202px;top:731px" width="18" height="17" viewBox="0 0 18 17"><rect x="1.2" y="3" width="9" height="12.5" rx="1.5" fill="none" stroke="#fff" stroke-width="1.5"/><rect x="3.5" y="1" width="4.5" height="2.4" fill="#fff"/><path d="M8,5.5 h7 v3 q0,3 -3.5,3 v4 h-0.8" fill="#fff" stroke="#39485c" stroke-width="1"/><path d="M9.8,5.5 v-3 M13.2,5.5 v-3" stroke="#39485c" stroke-width="1.4"/></svg><svg style="position:absolute;left:1226px;top:733px" width="18" height="14" viewBox="0 0 18 14"><g fill="#fff" stroke="#7b8798" stroke-width=".4"><rect x="1" y="10.5" width="2.3" height="2.5"/><rect x="4.3" y="8" width="2.3" height="5"/><rect x="7.6" y="5.5" width="2.3" height="7.5"/><rect x="10.9" y="3" width="2.3" height="10"/><rect x="14.2" y="0.8" width="2.3" height="12.2"/></g></svg><svg style="position:absolute;left:1250px;top:731px" width="18" height="18" viewBox="0 0 18 18"><path d="M1.5,6.5 h3 l4.5,-4.5 v14 l-4.5,-4.5 h-3 z" fill="#fff" stroke="#7b8798" stroke-width=".5"/><g fill="none" stroke="#fff" stroke-width="1.2"><path d="M11,6 q2,3 0,6"/><path d="M13,4 q3.4,5 0,10"/><path d="M15,2 q5,7 0,14"/></g></svg><span class="t" style="left:1298.50px;top:725.24px;font-size:12.3px;line-height:15px;color:#fff;transform:scaleX(0.8772);">23:19</span><span class="t" style="left:1285.00px;top:741.74px;font-size:12.3px;line-height:15px;color:#fff;transform:scaleX(0.8772);">23.02.2023</span><div style="position:absolute;left:1351px;top:720px;width:12px;height:35px;background:linear-gradient(90deg,rgba(60,75,95,.5),rgba(120,135,155,.5));border-left:1px solid #5a6a80"></div>
</body></html>
